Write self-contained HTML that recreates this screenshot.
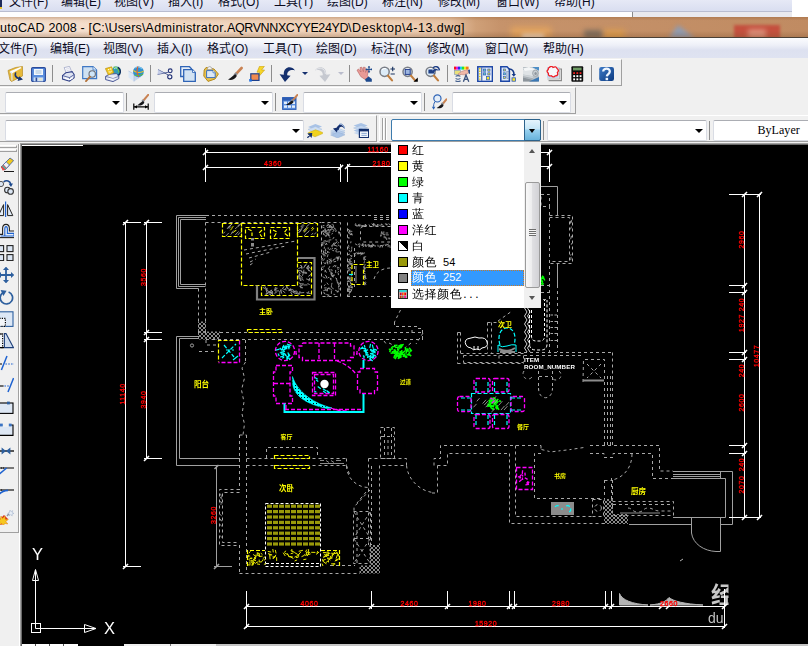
<!DOCTYPE html>
<html><head><meta charset="utf-8"><title>AutoCAD 2008</title>
<style>
html,body{margin:0;padding:0;background:#f0f0f0;overflow:hidden}
body{width:808px;height:646px;position:relative;font-family:"Liberation Sans","Noto Sans CJK SC",sans-serif;font-size:12px;color:#000}
.a{position:absolute}
.ic{position:absolute;overflow:hidden}
#top1{left:0;top:0;width:792px;height:11px;background:linear-gradient(#e6e9f6,#d9def0);overflow:hidden}
#top1 span,#menu span{position:absolute;white-space:nowrap;font-size:12px;line-height:16px;color:#0a0a1e}
#top1 span{top:-6px}
#topw{left:792px;top:0;width:16px;height:17px;background:#fff}
#top2{left:0;top:11px;width:792px;height:6px;background:linear-gradient(90deg,#fdfdfe 0,#fdfdfe 632px,#e9e9ee 632px);border-top:1px solid #b9bdd0;box-sizing:border-box}
#title{left:0;top:17px;width:808px;height:20px;background:linear-gradient(90deg,#f6e3d4 0,#f2d8c2 200px,#efd0b6 400px,#e8c4a6 450px,#cfa078 476px,#c6936b 500px,#c08b62 808px);overflow:hidden}
#title .t{position:absolute;left:-8.5px;top:3px;font-size:12.5px;line-height:16px;white-space:pre;color:#000}
#tline{left:0;top:37px;width:808px;height:1px;background:#4a4036}
#menu{left:0;top:38px;width:808px;height:20px;background:linear-gradient(#fbfcfe 0,#eef0f8 35%,#dde1f0 60%,#dfe3f1 100%);overflow:hidden}
#menu span{top:3px}
.tb{position:absolute;background:#f0f0f0;box-sizing:border-box;border-top:1px solid #fff;border-left:1px solid #fff;border-right:1px solid #a0a0a0;border-bottom:1px solid #a0a0a0}
.cb{position:absolute;background:#fff;box-sizing:border-box;border:1px solid #d9dce4;border-top-color:#abadb3;border-radius:2px;height:21px}
.cb i{position:absolute;right:3px;top:8px;width:0;height:0;border-left:4px solid transparent;border-right:4px solid transparent;border-top:4.5px solid #000}
.sep{position:absolute;width:1px;background:#8d8d8d}
.da{position:absolute;width:0;height:0;border-left:3px solid transparent;border-right:3px solid transparent;border-top:3.5px solid #15306e}
#draw{left:22px;top:145px;width:786px;height:501px;background:#000}
#dd{left:391px;top:142px;width:150px;height:166px;background:#fff;font-family:"Liberation Sans","WenQuanYi Zen Hei",sans-serif}
#dd .r u{text-decoration:none;font-size:11px;margin-left:6px;letter-spacing:-.1px}
#dd .r s{text-decoration:none;letter-spacing:2.7px;margin-left:1px}
#dd .r{position:absolute;left:0;width:133px;height:16px}
#dd .r b{position:absolute;left:7px;top:2px;width:8px;height:8px;border:1px solid #000}
#dd .r span{position:absolute;left:21px;top:-1px;font-size:12px;line-height:16px;white-space:nowrap;font-weight:normal}
</style></head><body>
<div class="a" id="top1">
<span style="left:9px">文件(F)</span><span style="left:61px">编辑(E)</span><span style="left:114px">视图(V)</span><span style="left:168px">插入(I)</span><span style="left:218px">格式(O)</span><span style="left:274px">工具(T)</span><span style="left:327px">绘图(D)</span><span style="left:382px">标注(N)</span><span style="left:438px">修改(M)</span><span style="left:496px">窗口(W)</span><span style="left:554px">帮助(H)</span>
</div>
<div class="a" style="left:0;top:0;width:2px;height:7px;background:#1c2a5a"></div><div class="a" style="left:0;top:7px;width:2px;height:2px;background:#e8c030"></div>
<div class="a" id="topw"></div>
<div class="a" id="top2"></div>
<div class="a" style="left:632px;top:12px;width:1px;height:5px;background:#8a8a8a"></div>
<div class="a" id="title"><div style="position:absolute;left:511px;top:10px;width:40px;height:14px;background:#e2a35e;filter:blur(3px)"></div><div style="position:absolute;left:522px;top:17px;width:22px;height:6px;background:#f0d8c0;filter:blur(2px)"></div><div style="position:absolute;left:603px;top:13px;width:22px;height:12px;background:#dc9c4c;filter:blur(3px)"></div><div style="position:absolute;left:584px;top:13px;width:18px;height:10px;background:#7c6c5c;filter:blur(2.5px)"></div><div style="position:absolute;left:668px;top:8px;width:0;height:0;border-left:10px solid transparent;border-right:18px solid transparent;border-bottom:14px solid #8f9bb0;filter:blur(2px)"></div><div style="position:absolute;left:734px;top:8px;width:46px;height:16px;background:#c4503e;filter:blur(1.6px)"></div><div style="position:absolute;left:748px;top:12px;width:18px;height:10px;background:#dc8c78;filter:blur(2.5px)"></div><div style="position:absolute;left:0;top:0;width:808px;height:20px;background:linear-gradient(rgba(150,95,50,.38) 0,rgba(190,140,100,.1) 18%,rgba(255,255,255,0) 35%,rgba(255,255,255,0) 70%,rgba(130,85,50,.32) 100%)"></div><div class="t"><span style="letter-spacing:.17px">AutoCAD 2008 - </span><span style="letter-spacing:.14px">[C:\Users\</span><span style="letter-spacing:.36px">Administrator.</span><span style="letter-spacing:-.39px">AQRVNNXCYYE24YD</span><span style="letter-spacing:.58px">\Desktop</span><span style="letter-spacing:.46px">\4-13.dwg]</span></div></div>
<div class="a" id="tline"></div>
<div class="a" id="menu">
<span style="left:-2px">文件(F)</span><span style="left:50px">编辑(E)</span><span style="left:103px">视图(V)</span><span style="left:157px">插入(I)</span><span style="left:207px">格式(O)</span><span style="left:263px">工具(T)</span><span style="left:316px">绘图(D)</span><span style="left:371px">标注(N)</span><span style="left:427px">修改(M)</span><span style="left:485px">窗口(W)</span><span style="left:543px">帮助(H)</span>
</div>
<!-- toolbars -->
<div class="tb" id="tb1" style="left:-2px;top:59px;width:624px;height:27px"></div>
<div class="tb" id="tb2" style="left:-2px;top:87px;width:578px;height:27px"></div>
<div class="tb" id="tb3" style="left:-2px;top:115px;width:379px;height:27px"></div>
<div class="tb" id="tb4" style="left:379px;top:115px;width:440px;height:27px"></div>

<svg class="ic" style="left:7px;top:66px" width="16" height="16" viewBox="0 0 16 16"><path d="M1 4.5 L8.5 1.5 L15.5 .5 L15.5 10 L4.5 15.5 L3 14Z" fill="#e6b93a" stroke="#b88d25" stroke-width=".7"/>
<path d="M3 5.2 L13.5 1 L14.5 2 L4.8 7.5Z" fill="#fdfdfd"/><path d="M3 5.5 L4.8 7.5 L5 14.5" fill="none" stroke="#dfe8f2" stroke-width="1.2"/>
<path d="M8.2 6.2 C6.5 9 8 12.3 11.2 13 L10.6 15 L16 13.6 L12.4 10.2 L11.9 11.6 C9.6 11 8.4 9 9.4 6.6Z" fill="#18336e"/></svg>
<svg class="ic" style="left:31px;top:66px" width="16" height="16" viewBox="0 0 16 16"><rect x=".6" y="1.6" width="13.8" height="13.8" rx="1.2" fill="#5b8fde" stroke="#2a4a9a" stroke-width="1.1"/>
<rect x="3" y="3" width="9" height="6" fill="#f4f8fc"/><path d="M4.5 5h6M4.5 7h6" stroke="#8fb0cf" stroke-width=".8"/>
<rect x="2.6" y="11.4" width="9.6" height="4" fill="#cfe0f4"/><rect x="4.6" y="11.6" width="1.6" height="3.8" fill="#2a4a9a"/><rect x="8" y="12" width="3" height="2.4" fill="#e6e6d0"/></svg>
<svg class="ic" style="left:60px;top:66px" width="16" height="16" viewBox="0 0 16 16"><g transform="translate(1.6 0) scale(.84 1)"><path d="M3 1.6 L9.4 .4 L12 5.8 L6 7.8Z" fill="#f8f8fb" stroke="#8e96bc" stroke-width=".7"/><path d="M5.2 3.2 l4-.9M5.9 4.8l4-.9" stroke="#c4c9dc" stroke-width=".6"/>
<path d="M1 9.6 L5 6.8 L12.6 5.6 L15 8.6 L15 11.8 L9.4 15.2 L1 13Z" fill="#dfe4f2" stroke="#2f3f86" stroke-width="1.1"/><path d="M1 9.6 L9.4 11.6 L15 8.6 M9.4 11.6V15" stroke="#2f3f86" stroke-width=".8" fill="none"/>
<path d="M4 12.2 L9.8 13.6 L13.4 11.6" fill="none" stroke="#fff" stroke-width="1.3"/></g></svg>
<svg class="ic" style="left:82px;top:66px" width="16" height="16" viewBox="0 0 16 16"><path d="M.7 .7 H11 L14.6 4 V12.6 H.7Z" fill="#cfe1f2" stroke="#3f78c4" stroke-width="1.2"/><path d="M11 .7 V4 H14.6" fill="#eaf2fa" stroke="#3f78c4" stroke-width=".8"/>
<circle cx="10.2" cy="8" r="3.2" fill="#cfe6f8" stroke="#6b6f78" stroke-width="1.1"/><path d="M8 10.6 L4 15.2" stroke="#b5733a" stroke-width="1.8" stroke-linecap="round"/></svg>
<svg class="ic" style="left:105px;top:66px" width="16" height="16" viewBox="0 0 16 16"><circle cx="11.4" cy="5.2" r="4.6" fill="#2f9ab8"/><path d="M8.6 1.6 C11.4 .6 14 2.4 14 6.6" fill="none" stroke="#62c45e" stroke-width="1.7"/><path d="M13 1.4 C16.6 4 15.6 8.4 13 9.6" fill="none" stroke="#16305e" stroke-width="1.4"/><path d="M9 3 a3 3 0 0 1 3-1" stroke="#bfe8f4" stroke-width=".9" fill="none"/>
<path d="M.6 10.4 L4.4 8.2 L11.6 7.6 L13.8 10.4 L13.8 12.6 L8 15.6 L.6 13.6Z" fill="#e4e8f4" stroke="#3d4c8e" stroke-width=".9"/><path d="M3.4 12.2 L8.6 10.6 L11.8 11.6 L7 14Z" fill="#fff"/><path d="M.6 10.4 L8 12.4 L13.8 10.4" fill="none" stroke="#3d4c8e" stroke-width=".6"/>
<path d="M.4 2.6 L6.6 .8 L8.8 6.6 L3.4 9Z" fill="#f2c81e" stroke="#b98f14" stroke-width=".7"/><circle cx="3.6" cy="3.6" r=".7" fill="#fff"/><circle cx="5.8" cy="3" r=".7" fill="#fff"/><path d="M3.6 5.8 Q5.4 6.8 6.8 5" stroke="#fff" stroke-width=".8" fill="none"/></svg>
<svg class="ic" style="left:128px;top:66px" width="16" height="16" viewBox="0 0 16 16"><path d="M.5 5 L6 8 L6 15.5 L.5 11.5Z" fill="#dbe7f6"/><path d="M6 8 L13 11 L6 15.5Z" fill="#c4d4ea"/><path d="M.5 5 L6 8 L6 15.5" fill="none" stroke="#a9bad6" stroke-width=".6"/>
<circle cx="10.4" cy="5.8" r="5.4" fill="#2f8fd0"/><path d="M7 2 A5 5 0 0 1 14 3" stroke="#7cc4ee" stroke-width="1.2" fill="none"/><path d="M5.4 4.5 C8 6.6 12 7 15.6 5.2" fill="none" stroke="#e8c62a" stroke-width="1.2"/><path d="M9.8 .6 C8.6 4 9 8 10.8 11" fill="none" stroke="#e06030" stroke-width="1.2"/><path d="M6.5 9 C9 10 13 9.5 15 8" fill="none" stroke="#58b84e" stroke-width="1.1"/></svg>
<svg class="ic" style="left:157px;top:66px" width="16" height="16" viewBox="0 0 16 16"><path d="M1 3.6 L11.4 9 M.6 8.4 L11.6 6.2" stroke="#44548e" stroke-width=".9" fill="none"/><path d="M1 3.6 L7 6.8 L.6 8.4Z" fill="#bcc6e6" opacity=".8"/>
<circle cx="13.2" cy="4.8" r="1.9" fill="#f4f4f8" stroke="#1f2f74" stroke-width="1.1"/><circle cx="12.8" cy="10.8" r="2.1" fill="#f4f4f8" stroke="#1f2f74" stroke-width="1.1"/></svg>
<svg class="ic" style="left:180px;top:66px" width="16" height="16" viewBox="0 0 16 16"><path d="M.7 .7 H9.5 L11.5 2.8 V10.5 H.7Z" fill="#e6eef8" stroke="#2f64b6" stroke-width="1.3"/><path d="M3.7 3.7 H12.5 L15.3 6.5 V15.3 H3.7Z" fill="#d3e3f3" stroke="#2f64b6" stroke-width="1.3"/><path d="M12.5 3.7 V6.5 H15.3" fill="#f2f7fc" stroke="#2f64b6" stroke-width=".8"/></svg>
<svg class="ic" style="left:203px;top:66px" width="16" height="16" viewBox="0 0 16 16"><path d="M3 1.5 L11 3 L15.4 8 L12 13 L5 15.4 L.8 10 L1.2 4Z" fill="#e9c34e" stroke="#b58a1c" stroke-width="1"/><path d="M4.5 2 Q6 -.5 8 1 L9.6 3.4 L4 3.6Z" fill="#f3f3f3" stroke="#8c8c8c" stroke-width=".6"/>
<path d="M3.6 4.6 H10 L12.2 6.8 V11.6 H3.6Z" fill="#dce9f6" stroke="#3a6fbe" stroke-width="1"/><path d="M10 4.6 V6.8 H12.2" fill="#fff" stroke="#3a6fbe" stroke-width=".7"/></svg>
<svg class="ic" style="left:227px;top:66px" width="16" height="16" viewBox="0 0 16 16"><path d="M14.6 2 L8.4 8.6" stroke="#c98252" stroke-width="2.6" stroke-linecap="round"/><path d="M9.6 7.2 L7.6 9.6" stroke="#8a8f98" stroke-width="2.8"/><path d="M8.4 8.2 C6 9 4 12 1 13.6 C4.5 14.6 8 13.2 9.8 10Z" fill="#16161a"/></svg>
<svg class="ic" style="left:249px;top:66px" width="16" height="16" viewBox="0 0 16 16"><path d="M10.5 .3 L15.4 .3 L12.6 4 L15.6 4 L9 11.5 L10.8 6.2 L8 6.2Z" fill="#f6d628" stroke="#c9a010" stroke-width=".6"/><rect x="1.8" y="7.8" width="8.2" height="6.6" fill="#f08a50" stroke="#1c3f8c" stroke-width="1.2"/><rect x=".2" y="13" width="2.6" height="2.6" fill="#1e6ee0"/></svg>
<svg class="ic" style="left:279px;top:66px" width="16" height="16" viewBox="0 0 16 16"><path d="M16 4.4 C12.6 -.8 4.2 .4 4.8 8.8 L.6 8.2 L6 16 L11.6 9.8 L8.2 9.2 C8 4.8 12 3 16 4.4Z" fill="#15306e"/></svg>
<svg class="ic" style="left:315px;top:66px" width="16" height="16" viewBox="0 0 16 16"><path d="M0 4.4 C3.4 -.8 11.8 .4 11.2 8.8 L15.4 8.2 L10 16 L4.4 9.8 L7.8 9.2 C8 4.8 4 3 0 4.4Z" fill="#c6c9d0"/><path d="M1 4 C4 1 10 1.4 10.4 8" stroke="#e6e8ec" stroke-width="1" fill="none"/></svg>
<svg class="ic" style="left:356px;top:66px" width="16" height="16" viewBox="0 0 16 16"><path d="M1 4.2 L2.6 3 L5 6 L4 1.6 L5.8 1.2 L7.4 5.6 L7.4 1.2 L9.2 1.4 L9.6 6.4 L11 3.6 L12.4 4.4 L11.4 9.6 L12.8 11.4 L9 13.4 L4.8 10.6Z" fill="#e89a96" stroke="#b4605e" stroke-width=".6"/>
<path d="M9 13.4 L12.6 10.6 L15.8 13 L15.8 15.8 L10 15.8Z" fill="#1d4a8e"/><path d="M13 .2 V6.6 M9.8 3.4 H16.2" stroke="#1d4a8e" stroke-width="1"/><path d="M13 0 l-1.3 1.5h2.6z M13 6.8 l-1.3-1.5h2.6z M9.6 3.4 l1.5-1.3v2.6z M16.4 3.4 l-1.5-1.3v2.6z" fill="#1d4a8e"/></svg>
<svg class="ic" style="left:379px;top:66px" width="16" height="16" viewBox="0 0 16 16"><circle cx="5.6" cy="5.8" r="4.6" fill="#dcebf7" stroke="#7a7e86" stroke-width="1.5"/><path d="M3 4 A3.4 3.4 0 0 1 7 2.8" stroke="#fff" stroke-width="1.2" fill="none"/><path d="M9 9.6 L13 14.4" stroke="#c07e3e" stroke-width="2.2" stroke-linecap="round"/><path d="M11.4 3 H16 M13.7 .8 V5.2 M11.6 8 H15.8" stroke="#16305e" stroke-width="1.1"/></svg>
<svg class="ic" style="left:402px;top:66px" width="16" height="16" viewBox="0 0 16 16"><circle cx="5.6" cy="5.8" r="4.6" fill="#dcebf7" stroke="#7a7e86" stroke-width="1.5"/><path d="M3 4 A3.4 3.4 0 0 1 7 2.8" stroke="#fff" stroke-width="1.2" fill="none"/><path d="M9 9.6 L13 14.4" stroke="#c07e3e" stroke-width="2.2" stroke-linecap="round"/><rect x="3.2" y="3.4" width="5" height="5" fill="#9db6e0" stroke="#233c8c" stroke-width="1"/><path d="M15.8 11.5 V15.8 H11.5Z" fill="#000"/></svg>
<svg class="ic" style="left:425px;top:66px" width="16" height="16" viewBox="0 0 16 16"><circle cx="5.6" cy="5.8" r="4.6" fill="#dcebf7" stroke="#7a7e86" stroke-width="1.5"/><path d="M3 4 A3.4 3.4 0 0 1 7 2.8" stroke="#fff" stroke-width="1.2" fill="none"/><path d="M9 9.6 L13 14.4" stroke="#c07e3e" stroke-width="2.2" stroke-linecap="round"/><path d="M3.4 3.4 H7.6 V4.8 C9.6 2.2 12.6 2.2 13.6 5 C12 3.6 10.6 4 9 6.4 L10.4 7.6 H3.4Z" fill="#1f3f86"/><path d="M8 2.2 C10 -.4 14 .2 14.4 4.4" stroke="#1f3f86" stroke-width="1.4" fill="none"/></svg>
<svg class="ic" style="left:454px;top:66px" width="16" height="16" viewBox="0 0 16 16"><rect x="0" y=".6" width="2" height="3" fill="#f0101c"/><rect x="2" y=".6" width="2" height="3" fill="#e818d8"/><rect x="4" y=".6" width="2" height="3" fill="#2030f0"/><rect x="6" y=".6" width="2" height="3" fill="#18d0e8"/><rect x="8" y=".6" width="2" height="3" fill="#28e030"/><rect x="10" y=".6" width="2" height="3" fill="#f0e818"/><rect x="12" y=".6" width="2.6" height="3" fill="#f07818"/>
<rect x=".4" y="4.4" width="6" height="4.2" fill="#e8e07a" stroke="#7f93b6" stroke-width=".6"/><path d="M4 8 L7.4 5.6 L10 4.6 L13.6 3.8 L14.6 7 L11 9 L7 8.4 L5.4 9.2Z" fill="#f0b8a8" stroke="#b5776c" stroke-width=".5"/><path d="M14 4 L16 3.4 L16 8 L14.8 7.6Z" fill="#2a4a86"/>
<path d="M1.6 10.4 Q4 8.8 6.4 10.4 M1.6 12.4 Q4 14 6.4 12.4 M1.4 14.8 Q4 16.4 6.6 14.8" stroke="#44608e" stroke-width="1.1" fill="none"/><path d="M9.4 15.8 L12 9 L14.8 15.8 M10.4 13.4 H13.8" stroke="#39507c" stroke-width="1.3" fill="none"/></svg>
<svg class="ic" style="left:477px;top:66px" width="16" height="16" viewBox="0 0 16 16"><rect x=".8" y=".8" width="14.6" height="14.6" fill="#eef3fa" stroke="#1c46a6" stroke-width="1.5"/><path d="M2.8 2v12" stroke="#e8d21e" stroke-width="1.6" stroke-dasharray="1.4 1.2"/><path d="M4.8 1.5v13.2" stroke="#1c46a6" stroke-width="1"/>
<g fill="#e8e04a" stroke="#2a56b8" stroke-width=".7"><rect x="6.6" y="3" width="2.2" height="2.2" fill="#6ad0c0"/><rect x="10.8" y="3" width="2.2" height="2.2"/><rect x="6.6" y="6.8" width="2.2" height="2.2" fill="#6ad0c0"/><rect x="10.8" y="6.8" width="2.2" height="2.2"/><rect x="9.4" y="10.6" width="3.2" height="3.2" fill="#f4e430"/></g></svg>
<svg class="ic" style="left:500px;top:66px" width="16" height="16" viewBox="0 0 16 16"><path d="M.8 .8 H7 L9.4 3.2 V15.2 H.8Z" fill="#dfe9f6" stroke="#1c46a6" stroke-width="1.5"/><g fill="#e8e04a" stroke="#2a56b8" stroke-width=".6"><rect x="3.6" y="3" width="2" height="2"/><rect x="3.6" y="6.8" width="2" height="2" fill="#6ad0c0"/><rect x="3.6" y="10.6" width="2" height="2"/></g>
<rect x="6.8" y="5.6" width="2" height="7" fill="#b8c8e0" stroke="#6c84b0" stroke-width=".5"/><path d="M8.6 3 C12.4 2.6 14 5.4 14 8.4" stroke="#163a8a" stroke-width="1.6" fill="none"/><path d="M11.6 8 H16 L13.8 10.8Z" fill="#163a8a"/><rect x="12" y="11.8" width="3.4" height="3.4" fill="#f4e430" stroke="#2a56b8" stroke-width=".8"/></svg>
<svg class="ic" style="left:523px;top:66px" width="16" height="16" viewBox="0 0 16 16"><rect x="0" y="1" width="16" height="14.4" fill="#b9c0c6"/><path d="M9 1H16V5Z" fill="#4d8ec6"/><path d="M0 11.5 L16 15.4 H0Z" fill="#8d959c"/><path d="M6 15.4 L16 11 V15.4Z" fill="#3b78b4"/><path d="M0 4 L9 1.6 L15.6 4.6 L15.6 9.6 L12 10.6 L0 8.6Z" fill="#dfe3e6"/><path d="M0 2.4 L6 1 L12 3.4 L2 5Z" fill="#f4f6f7"/><ellipse cx="12.4" cy="7.2" rx="2.8" ry="3.2" fill="#c9cfd4" stroke="#8c9298" stroke-width=".7"/><ellipse cx="12.6" cy="7.4" rx="1.2" ry="1.5" fill="#8e959c"/><path d="M0 8.6 L10 10.4 L10 12.6 L0 10.6Z" fill="#ccd2d6"/><path d="M0 10.6 L10 12.8" stroke="#9aa1a8" stroke-width=".6"/></svg>
<svg class="ic" style="left:546px;top:66px" width="16" height="16" viewBox="0 0 16 16"><path d="M4 3 H15.4 V14.6 H2.6" fill="none" stroke="#8b8b8b" stroke-width="1.2"/><path d="M3 2 H13.6 V13 H1.4" fill="#ededed" stroke="#aaa" stroke-width=".8"/><rect x="1" y="1" width="11.6" height="11" fill="#c6d8ee"/>
<path d="M3.4 1.4 Q5.6 -.6 7 1.4 Q10 -.2 11 2.4 Q13.6 4.4 11.4 6.4 Q12.6 9.6 9.4 9.8 Q7.4 12 5.4 9.8 Q2 10.4 2.4 7.2 Q-.2 5 2.2 3.6 Q2 2 3.4 1.4Z" fill="#f6f8fb" stroke="#ee1c24" stroke-width="1.3"/></svg>
<svg class="ic" style="left:571px;top:66px" width="16" height="16" viewBox="0 0 16 16"><rect x=".4" y=".2" width="11.8" height="15.6" rx="1" fill="#0c0c0c"/><rect x="2" y="1.6" width="8.6" height="2.8" fill="#6d9a62"/><g fill="#ee2222"><rect x="2.2" y="6.2" width="1.8" height="1.8"/><rect x="5.4" y="6.2" width="1.8" height="1.8"/><rect x="8.6" y="6.2" width="1.8" height="1.8"/></g><g fill="#fff"><rect x="2.2" y="9.2" width="1.9" height="1.9"/><rect x="5.4" y="9.2" width="1.9" height="1.9"/><rect x="8.6" y="9.2" width="1.9" height="1.9"/><rect x="2.2" y="12.4" width="1.9" height="1.9"/><rect x="5.4" y="12.4" width="1.9" height="1.9"/><rect x="8.6" y="12.4" width="1.9" height="1.9"/></g></svg>
<svg class="ic" style="left:599px;top:66px" width="16" height="16" viewBox="0 0 16 16"><defs><linearGradient id="hg" x1="0" y1="0" x2="1" y2="1"><stop offset="0" stop-color="#3d7ac6"/><stop offset="1" stop-color="#0c3a80"/></linearGradient></defs><rect x=".2" y="1" width="14.8" height="14" rx="2.2" fill="url(#hg)"/><path d="M4.2 5.6 C4.2 1.6 11 1.8 10.8 5.6 C10.8 8 8 8 7.8 10.4" fill="none" stroke="#eef6ff" stroke-width="2.3"/><rect x="6.6" y="11.8" width="2.5" height="2.4" fill="#eef6ff"/></svg>
<div class="sep" style="left:52px;top:65px;height:17px"></div>
<div class="sep" style="left:150px;top:65px;height:17px"></div>
<div class="sep" style="left:271px;top:65px;height:17px"></div>
<div class="sep" style="left:349px;top:65px;height:17px"></div>
<div class="sep" style="left:447px;top:65px;height:17px"></div>
<div class="sep" style="left:591px;top:65px;height:17px"></div>
<div class="da" style="left:302px;top:72px"></div><div class="da" style="left:338px;top:72px;border-top-color:#b9bccc"></div>
<div class="cb" style="left:5px;top:92px;width:119px"><i></i></div>
<div class="cb" style="left:154px;top:92px;width:119px"><i></i></div>
<div class="cb" style="left:303px;top:92px;width:119px"><i></i></div>
<div class="cb" style="left:452px;top:92px;width:119px"><i></i></div>
<div class="sep" style="left:126px;top:93px;height:18px"></div>
<div class="sep" style="left:275px;top:93px;height:18px"></div>
<div class="sep" style="left:424px;top:93px;height:18px"></div>
<svg class="ic" style="left:133px;top:94px" width="16" height="16" viewBox="0 0 16 16"><path d="M15.2 .8 L10 7" stroke="#c98252" stroke-width="2" stroke-linecap="round"/><path d="M10.8 6 L9.4 7.8" stroke="#8a8f98" stroke-width="2.6"/><path d="M10 7 C8 8 6.4 10 4 11.4 C7 12 10 11 11.4 8.4Z" fill="#16161a"/><path d="M.8 9.6 V15.8 M15.2 9.6 V15.8 M.8 12.8 H15.2" stroke="#000" stroke-width="1.2"/><path d="M1 12.8 l3-1.6v3.2z M15 12.8 l-3-1.6v3.2z" fill="#000"/></svg>
<svg class="ic" style="left:282px;top:94px" width="16" height="16" viewBox="0 0 16 16"><rect x=".6" y="3.6" width="13.4" height="11.8" fill="#5b8fde" stroke="#2c5cb4" stroke-width="1"/><rect x=".6" y="3.6" width="13.4" height="3" fill="#2c5cb4"/><g fill="#e4eefb"><rect x="2" y="7.6" width="3" height="2.4"/><rect x="6" y="7.6" width="3" height="2.4"/><rect x="10" y="7.6" width="3" height="2.4"/><rect x="2" y="11.4" width="3" height="2.4"/><rect x="6" y="11.4" width="3" height="2.4"/><rect x="10" y="11.4" width="3" height="2.4"/></g>
<path d="M15.4 1 L10.4 6.6" stroke="#c98252" stroke-width="2" stroke-linecap="round"/><path d="M11 5.6 L9.6 7.4" stroke="#8a8f98" stroke-width="2.6"/><path d="M10.2 6.6 C8 7.4 6.4 9.6 4 10.8 C7 11.6 10 10.6 11.6 8Z" fill="#16161a"/></svg>
<svg class="ic" style="left:431px;top:94px" width="16" height="16" viewBox="0 0 16 16"><circle cx="6.4" cy="4.4" r="3.6" fill="#e4eef9" stroke="#2f64b6" stroke-width="1.2"/><path d="M4.2 7.4 C2.4 9.4 2.6 12 2.6 14" stroke="#2f64b6" stroke-width="1" fill="none"/><path d="M2.6 15.8 l-1.8-3h3.6z" fill="#2f64b6"/><path d="M15.4 5.4 L11.6 10" stroke="#c98252" stroke-width="2" stroke-linecap="round"/><path d="M12 9 L10.6 10.8" stroke="#8a8f98" stroke-width="2.4"/><path d="M11.2 10 C9.4 10.8 8 12.8 5.6 14 C8.6 14.8 11.4 13.8 12.6 11.4Z" fill="#16161a"/></svg>
<div class="cb" style="left:5px;top:120px;width:299px"><i></i></div>
<svg class="ic" style="left:307px;top:122px" width="16" height="16" viewBox="0 0 16 16"><path d="M1 5 L8.4 2 L15 4.6 L7.8 7.8Z" fill="#a9c3e6"/><path d="M1 7.4 L8.4 4.6 L15 7.2 L7.8 10.4Z" fill="#cfdff3" stroke="#9bb5da" stroke-width=".4"/><path d="M1.4 10.6 L8.6 7.8 L15.6 10.4 L15.6 11.6 L8 14.8 L1.4 12Z" fill="#f0d21e" stroke="#c3a413" stroke-width=".5"/><path d="M.4 15.8 L4.4 12 M4.6 11.6 l-3 .4 2.6 2.6z" stroke="#15306e" stroke-width="1.2" fill="#15306e"/></svg>
<svg class="ic" style="left:330px;top:122px" width="16" height="16" viewBox="0 0 16 16"><path d="M.6 9 L8 6.2 L15 8.8 L7.6 12Z" fill="#cfdff3" stroke="#9bb5da" stroke-width=".4"/><path d="M.6 11 L8 8.2 L15 10.8 L7.6 14Z" fill="#b9cfec" stroke="#8fabd4" stroke-width=".4"/><path d="M.6 13 L8 10.2 L15 12.8 L7.6 16Z" fill="#a9c3e6" stroke="#8aa6cf" stroke-width=".4"/>
<path d="M3 6.4 L8.6 5.2 L6.8 10.4Z" fill="#15306e"/><path d="M6.4 7.4 C7 2 12.6 1 14.4 6.6 C12 3.4 9 4.4 8.8 8Z" fill="#15306e"/><path d="M9 2.6 C11.6 1 14.2 3 14.4 6.6" stroke="#5f86c2" stroke-width="1" fill="none"/></svg>
<svg class="ic" style="left:353px;top:122px" width="16" height="16" viewBox="0 0 16 16"><path d="M.6 3.6 L8 1 L14.6 3.4 L7.4 6.4Z" fill="#a9c3e6"/><path d="M.6 6 L8 3.4 L14.6 5.8 L7.4 8.8Z" fill="#c3d6ef" stroke="#9bb5da" stroke-width=".4"/><path d="M.6 8.6 L8 6 L14.6 8.4 L7.4 11.4Z" fill="#a9c3e6"/><path d="M.6 11 L8 8.4 L12 10 L7.4 13.6Z" fill="#c3d6ef"/>
<rect x="6.4" y="7.4" width="9.2" height="8.2" fill="#eef4fb" stroke="#12306e" stroke-width="1.2"/><rect x="6.4" y="7.4" width="9.2" height="2" fill="#12306e"/><path d="M8.4 11.4 H13.8 M8.4 13.4 H13.8" stroke="#7fa0cf" stroke-width=".9"/></svg>
<div class="a" style="left:382px;top:118px;width:1px;height:22px;background:#a0a0a0"></div><div class="a" style="left:383px;top:118px;width:1px;height:22px;background:#fff"></div><div class="a" style="left:385px;top:118px;width:1px;height:22px;background:#a0a0a0"></div><div class="a" style="left:386px;top:118px;width:1px;height:22px;background:#fff"></div>
<div class="a" style="left:391px;top:119px;width:150px;height:22px;box-sizing:border-box;background:#fff;border:1px solid #3d7bad;border-radius:2px"></div>
<div class="a" style="left:524px;top:119px;width:17px;height:22px;box-sizing:border-box;border:1px solid #2c628b;border-radius:0 2px 2px 0;background:linear-gradient(#e5f4fc 0,#c4e5f6 45%,#98d1ef 50%,#68b3db 100%)"><i style="position:absolute;left:4px;top:9px;width:0;height:0;border-left:3.5px solid transparent;border-right:3.5px solid transparent;border-top:4px solid #000"></i></div>
<div class="sep" style="left:543px;top:121px;height:19px"></div>
<div class="cb" style="left:547px;top:120px;width:160px"><i></i></div>
<div class="sep" style="left:709px;top:121px;height:19px"></div>
<div class="cb" style="left:713px;top:120px;width:100px"><span style="position:absolute;left:43.5px;top:1px;font:12px/16px 'Liberation Serif',serif;letter-spacing:.05px">ByLayer</span></div>
<div class="a" style="left:0;top:144px;width:22px;height:502px;background:#f0f0f0"></div>
<div class="a" style="left:18px;top:144px;width:1px;height:389px;background:#a0a0a0"></div><div class="a" style="left:19px;top:144px;width:1px;height:502px;background:#fff"></div>
<div class="a" style="left:0;top:532px;width:19px;height:1px;background:#a0a0a0"></div>
<div class="a" style="left:0;top:145px;width:17px;height:3px;box-sizing:border-box;border:1px solid #fff;border-right-color:#a0a0a0;border-bottom-color:#a0a0a0;border-left:0"></div><div class="a" style="left:0;top:149px;width:17px;height:3px;box-sizing:border-box;border:1px solid #fff;border-right-color:#a0a0a0;border-bottom-color:#a0a0a0;border-left:0"></div>
<svg class="ic" style="left:-2px;top:156px" width="16" height="16" viewBox="0 0 16 16"><path d="M3 11 L12 2 L15.6 4.6 L7 14Z" fill="#f0c81e" stroke="#2a4a9a" stroke-width=".7"/><path d="M3 11 L8.2 5.8 L11.4 9 L7 14Z" fill="#eef2f8" stroke="#2a4a9a" stroke-width=".6"/><path d="M3 11 L5.4 8.6 L8.8 12 L7 14 L4.6 14.4Z" fill="#e04a4a"/><path d="M4.4 9.6 L8 13" stroke="#48b8b0" stroke-width="1.4"/><path d="M6 15.6 H16" stroke="#000" stroke-width="1"/></svg>
<svg class="ic" style="left:-2px;top:179px" width="16" height="16" viewBox="0 0 16 16"><circle cx="3" cy="5" r="2.6" fill="#dbe6f4" stroke="#555" stroke-width="1"/><circle cx="9.4" cy="11" r="2.8" fill="#dbe6f4" stroke="#333" stroke-width="1.1"/><circle cx="12.6" cy="12.4" r="2.8" fill="#dbe6f4" stroke="#333" stroke-width="1.1"/><path d="M5.6 2.8 C8.6 .6 12 2 12.8 5" stroke="#1d4a8e" stroke-width="1.5" fill="none"/><path d="M10.6 4.8 L15 4.4 L13 8Z" fill="#1d4a8e"/></svg>
<svg class="ic" style="left:-2px;top:201px" width="16" height="16" viewBox="0 0 16 16"><path d="M5.6 3.6 V14.6 H.4Z" fill="#e3ecf7" stroke="#222" stroke-width="1"/><path d="M9.6 3.6 V14.6 H14.8Z" fill="#e3ecf7" stroke="#222" stroke-width="1"/><path d="M7.6 .6 V16" stroke="#1e62d0" stroke-width="1.2"/></svg>
<svg class="ic" style="left:-2px;top:223px" width="16" height="16" viewBox="0 0 16 16"><path d="M1 11.4 H4.6 V5.6 Q4.6 1.4 8 1.4 Q11.4 1.4 11.4 5.6 V8 H16" fill="none" stroke="#222" stroke-width="1.1"/><path d="M1 14.6 H16" stroke="#222" stroke-width="1.1"/><path d="M2.6 13 H6.8 V6 Q6.8 3.6 8 3.6 Q9.4 3.6 9.4 6 V10.4 H16 V13Z" fill="#e3ecf7" stroke="#1e62d0" stroke-width="1.1"/></svg>
<svg class="ic" style="left:-2px;top:245px" width="16" height="16" viewBox="0 0 16 16"><g fill="#dbe6f4" stroke="#222" stroke-width="1.1"><rect x="-.4" y=".6" width="6" height="6"/><rect x="9" y=".6" width="6" height="6"/><rect x="-.4" y="9.6" width="6" height="6"/><rect x="9" y="9.6" width="6" height="6"/></g></svg>
<svg class="ic" style="left:-2px;top:267px" width="16" height="16" viewBox="0 0 16 16"><path d="M8 1 V15 M1 8 H15" stroke="#2d5f9e" stroke-width="1.8"/><path d="M8 -.4 l-3 3.4h6z M8 16.4 l-3-3.4h6z M-.4 8 l3.4-3v6z M16.4 8 l-3.4-3v6z" fill="#2d5f9e"/></svg>
<svg class="ic" style="left:-2px;top:289px" width="16" height="16" viewBox="0 0 16 16"><path d="M5 3.6 A6.2 6.2 0 1 0 10.6 3" fill="none" stroke="#2d5f9e" stroke-width="1.7"/><path d="M2.6 1 L8.6 1.8 L5.4 7Z" fill="#2d5f9e"/></svg>
<svg class="ic" style="left:-2px;top:311px" width="16" height="16" viewBox="0 0 16 16"><rect x="-1" y=".8" width="16" height="14.6" fill="#dce7f5" stroke="#2d5f9e" stroke-width="1.1"/><rect x="-1" y="7.4" width="8.4" height="8" fill="#f3f6fa" stroke="#000" stroke-width="1.2" stroke-dasharray="1.2 1.2"/></svg>
<svg class="ic" style="left:-2px;top:333px" width="16" height="16" viewBox="0 0 16 16"><rect x="-1" y="1" width="5.6" height="13.6" fill="#f3f6fa" stroke="#000" stroke-width="1.2" stroke-dasharray="1.2 1.2"/><path d="M8 .6 L15.4 14.6 H6.4 V.6Z" fill="#cfdcee" stroke="#1d3f7a" stroke-width="1.1"/><path d="M-1 1 H4.6 M-1 14.6 H6" stroke="#000" stroke-width="1.2"/></svg>
<svg class="ic" style="left:-2px;top:355px" width="16" height="16" viewBox="0 0 16 16"><path d="M-1 9 H4" stroke="#000" stroke-width="1.1"/><path d="M3.4 15 L9 1" stroke="#1e62d0" stroke-width="1.5"/><path d="M7.4 9 H16" stroke="#1e62d0" stroke-width="1.2" stroke-dasharray="1.6 1.2"/></svg>
<svg class="ic" style="left:-2px;top:377px" width="16" height="16" viewBox="0 0 16 16"><path d="M-1 9 H5.6" stroke="#000" stroke-width="1.1"/><path d="M10 15 L15.6 1" stroke="#1e62d0" stroke-width="1.5"/><path d="M6.4 9 H12" stroke="#1e62d0" stroke-width="1.2" stroke-dasharray="1.6 1.2"/></svg>
<svg class="ic" style="left:-2px;top:399px" width="16" height="16" viewBox="0 0 16 16"><rect x="-1" y="4" width="16" height="10.4" fill="#dde7f4" stroke="#000" stroke-width="1.1"/><rect x="9" y="2.6" width="2.8" height="2.8" fill="#2d5f9e"/></svg>
<svg class="ic" style="left:-2px;top:421px" width="16" height="16" viewBox="0 0 16 16"><path d="M4 4 H-1 V14.4 H15 V4 H12" fill="#dde7f4" stroke="#000" stroke-width="1.1"/><rect x="4" y="4" width="8" height="1.8" fill="#f0f0f0"/><rect x="2" y="2.6" width="2.8" height="2.8" fill="#3b74c4"/><rect x="10.8" y="2.6" width="2.8" height="2.8" fill="#3b74c4"/></svg>
<svg class="ic" style="left:-2px;top:443px" width="16" height="16" viewBox="0 0 16 16"><path d="M-1 8 H16" stroke="#000" stroke-width="1.3"/><path d="M3.6 4.6 L8 8 L3.6 11.4Z M12.4 4.6 L8 8 L12.4 11.4Z" fill="#2d5f9e"/></svg>
<svg class="ic" style="left:-2px;top:465px" width="16" height="16" viewBox="0 0 16 16"><path d="M-1 3 H16" stroke="#000" stroke-width="1.1" stroke-dasharray="5 0"/><path d="M-1 3 H6" stroke="#000" stroke-width="1.1" stroke-dasharray="1 1"/><path d="M8.6 3 L-1 11" stroke="#1e62d0" stroke-width="1.6"/></svg>
<svg class="ic" style="left:-2px;top:487px" width="16" height="16" viewBox="0 0 16 16"><path d="M-1 3 H16" stroke="#000" stroke-width="1.1"/><path d="M-1 3 H5" stroke="#000" stroke-width="1.1" stroke-dasharray="1 1"/><path d="M10 3.4 C4 3.6 1 6 -1 11" stroke="#1e62d0" stroke-width="1.6" fill="none"/></svg>
<svg class="ic" style="left:-2px;top:509px" width="16" height="16" viewBox="0 0 16 16"><path d="M-1 13 L6 6 L10 10 L3 16Z" fill="#d82a1e"/><path d="M3 7 l1.6 2.4 2.4-2.6.2 3.4 3.2.2-2.6 2 2 2.6-3.4-.6-.8 3-1.6-2.8-3 1.4 1-3.2-3-1.4 3.2-.8z" fill="#f6c820" stroke="#e07a10" stroke-width=".5"/><path d="M9 7 L13 2.4" stroke="#8c94a0" stroke-width="1.4"/><path d="M12 1 l1 1.6 1.8-1 -.6 2 1.8.8-2 .6.2 2-1.6-1.4-1.4 1.4.2-2-1.8-.4 1.6-1z" fill="#e8eef6" stroke="#8aa0c0" stroke-width=".4"/></svg>
<div class="a" style="left:20px;top:143px;width:788px;height:503px;background:#a0a0a0"></div><div class="a" style="left:21px;top:144px;width:787px;height:502px;background:#696969"></div>
<div class="a" id="draw"></div>
<div class="a" style="left:22px;top:145px;width:61px;height:1px;background:#fff"></div>
<div class="a" style="left:22px;top:644px;width:56px;height:2px;background:#fff"></div>
<div class="a" style="left:35px;top:644px;width:1px;height:2px;background:#555"></div>
<div class="a" style="left:49px;top:644px;width:1px;height:2px;background:#555"></div>
<div class="a" style="left:63px;top:644px;width:1px;height:2px;background:#555"></div>
<div class="a" style="left:124px;top:644px;width:92px;height:2px;background:#f0f0f0"></div><div class="a" style="left:170px;top:644px;width:1px;height:2px;background:#777"></div><div class="a" style="left:216px;top:644px;width:592px;height:2px;background:#c4c4c4"></div>
<svg class="a" style="left:0;top:0;will-change:transform" width="808" height="646" viewBox="0 0 808 646">
<defs><pattern id="cs" width="3" height="3" patternUnits="userSpaceOnUse"><rect width="3" height="3" fill="#0ff"/><rect x="1" y="1" width="1" height="1" fill="#000"/></pattern><pattern id="xh" width="4" height="4" patternUnits="userSpaceOnUse"><path d="M0 0L4 4M4 0L0 4" stroke="#9a9a9a" stroke-width=".9"/></pattern></defs>
<style>
.d{fill:none;stroke:#fff;stroke-width:1}
.g{fill:none;stroke:#a0a0a0;stroke-width:1}
.gk{fill:none;stroke:#8c8c8c;stroke-width:2}
.gk2{fill:none;stroke:#808080;stroke-width:2.2}
.gf{fill:#8c8c8c}
.w,.wc{fill:none;stroke:#a8a8a8;stroke-width:1;stroke-dasharray:3 3}
.w2{fill:none;stroke:#9c9c9c;stroke-width:.9}
.w3{fill:none;stroke:#a8a8a8;stroke-width:1;stroke-dasharray:2.5 1.5}
.wd{fill:none;stroke:#fff;stroke-width:1;stroke-dasharray:3 2}
.wd2{fill:none;stroke:#e8e8e8;stroke-width:.9}
.wh{fill:none;stroke:#fff;stroke-width:1}
.wf{fill:#fff}
.y{fill:none;stroke:#ff0;stroke-width:1.2;stroke-dasharray:4 2}
.y2{fill:none;stroke:#e6e600;stroke-width:1}
.m{fill:none;stroke:#f0f;stroke-width:1.3;stroke-dasharray:4 2}
.c{fill:none;stroke:#0ff;stroke-width:1.2;stroke-dasharray:4 2}
.c2{fill:none;stroke:#0ff;stroke-width:1.2}
.c3{fill:none;stroke:#0ff;stroke-width:1}
.ck{fill:none;stroke:#0ff;stroke-width:2}
.cf{fill:#0ff}
.cf2{fill:url(#cs);stroke:#0ff;stroke-width:.6}
.gr{fill:none;stroke:#0f0;stroke-width:1.5}
.ol{fill:#99990a}
.bk{stroke:#000;stroke-width:1}
.bkf{fill:#000}
.wm{fill:#b4b4b4;stroke:#b4b4b4;stroke-width:1}
text{font-family:"Liberation Sans","Noto Sans CJK SC",sans-serif}
.r{fill:#f00;stroke:#f00;stroke-width:.35px;font-size:7px;letter-spacing:.55px;text-anchor:middle}
.t{stroke-width:1.6}
.yt{fill:#ff0;font-weight:bold}
.wt{fill:#fff;font-size:6.2px;font-weight:bold;letter-spacing:.1px}
.u{fill:#fff;font-size:16.5px;text-anchor:middle}
.wmt{fill:#c8c8c8;font-weight:bold}
.wmt2{fill:#c0c0c0}
</style>
<polyline class="g" points="206,215.5 176.5,215.5 176.5,288.5 198.5,288.5"/>
<polyline class="g" points="206,217.5 178.5,217.5 178.5,286.5 205.5,286.5"/>
<polyline class="g" points="206,219.5 180.5,219.5 180.5,284.5 205.5,284.5"/>
<polyline class="g" points="199,336.5 176.5,336.5 176.5,465.5 240,465.5"/>
<polyline class="g" points="199,338.5 179.5,338.5 179.5,458.5 240,458.5"/>
<polyline class="g" points="541,186.5 557.5,186.5 557.5,215"/>
<path class="g" d="M557.5 264L557.5 285"/>
<polyline class="g" points="673,471.5 732.5,471.5 732.5,524.5 721,524.5"/>
<path class="g" d="M673 474.5L720.5 474.5"/>
<path class="g" d="M673 476.5L720.5 476.5"/>
<polyline class="g" points="673,478.5 725.5,478.5 725.5,517.5"/>
<path class="g" d="M720.5 471.5L720.5 478.5"/>
<path class="g" d="M673 517.5L725.5 517.5"/>
<path class="g" d="M629 524.5L691.5 524.5"/>
<polyline class="g" points="691.5,517.5 691.5,533"/>
<path class="g" d="M691.5 533C693 544 704 551 716 551.5H720.5V517.5"/>
<path class="w" d="M206 215.5L391 215.5"/>
<path class="w" d="M205.5 222.5L321 222.5"/>
<path class="w" d="M205.5 222.5L205.5 334"/>
<path class="w" d="M198.5 288.5L198.5 334"/>
<path class="w" d="M374 217.5L391 217.5"/>
<path class="w" d="M374 219.5L391 219.5"/>
<path class="w" d="M220 332.5L423 332.5"/>
<path class="w" d="M206 339.5L423 339.5"/>
<polyline class="w" points="394.5,322 394.5,326.5 418,326.5 418,328.5 422.5,328.5 422.5,340"/>
<path class="w" d="M400.5 310L394.5 322"/>
<path class="w" d="M412 330L412 333"/>
<path class="w" d="M423 333L416 344"/>
<path class="w" d="M384 341L387 345"/>
<path class="w" d="M245.5 340L245.5 362"/>
<polyline class="w" points="245.5,362 242,368 244.5,378 241.5,390 244,402 242,414 244.5,424 243,435"/>
<path class="w" d="M199 351.5L214 351.5"/>
<polyline class="w" points="206,340 206,345 216,345"/>
<circle class="g" cx="192" cy="345.5" r="1.6"/>
<polyline class="w" points="239.5,435 239.5,490"/>
<path class="w" d="M246.5 435L246.5 573"/>
<path class="w" d="M239.5 435L246.5 435"/>
<path class="w" d="M239.5 545L239.5 573.5"/>
<path class="w" d="M239.5 573.5L360 573.5"/>
<path class="w" d="M246.5 458.5L346 458.5"/>
<path class="w" d="M246.5 465.5L346 465.5"/>
<path class="w" d="M346.5 458.5L346.5 465.5"/>
<polyline class="w" points="266.5,458 266.5,447.5 317.5,447.5 317.5,458"/>
<path class="w2" d="M320 460.5h4m2 0l3 2m2-2l3 2m2-2h5M320 463.5h24"/>
<polyline class="w" points="239.5,489.5 219.5,489.5 219.5,545.5 239.5,545.5"/>
<polyline class="w" points="239.5,492.5 222.5,492.5 222.5,542.5 239.5,542.5"/>
<path class="w2" d="M220.4 519.5L221.5 521.3M220.7 501.3L222.0 503.3M220.8 496.9L221.8 498.3M220.4 535.6L221.7 537.6M220.2 514.2L221.6 516.2M220.8 495.3L221.8 496.8M220.2 493.6L221.3 495.3M220.4 501.5L221.8 503.6M220.3 524.4L221.7 526.5M220.2 518.9L221.6 521.1M220.4 503.6L221.2 504.9M220.3 497.1L221.8 499.5"/>
<path class="w" d="M346.5 466C347 478 356 487 368 487.5"/>
<path class="w" d="M346.5 465.5L350 476"/>
<polyline class="w" points="368.5,458.5 406.5,458.5 406.5,465.5 379.5,465.5"/>
<path class="w" d="M368.5 458.5L368.5 545"/>
<path class="w" d="M371.5 466L371.5 545"/>
<path class="w" d="M379.5 465.5L379.5 545"/>
<path class="w" d="M406.5 465.5C408 480 420 491 433 492.5"/>
<polyline class="w" points="437.5,465.5 437.5,493 431,493"/>
<polyline class="w" points="437.5,465.5 447.5,465.5 447.5,453.5 480,453.5"/>
<polyline class="w" points="434,465.5 434,458.5 440.5,458.5 440.5,445.5 541,445.5"/>
<rect class="w" x="380.5" y="427.5" width="14" height="31"/>
<path class="w" d="M384.5 428L384.5 458"/>
<path class="w" d="M388 440L388 458"/>
<path class="w" d="M391.5 428L391.5 458"/>
<path class="w" d="M381 436.5L394 436.5"/>
<polyline class="w" points="370,490 354,507 354,511"/>
<path class="w" d="M366 492L357 503"/>
<rect class="w" x="353.5" y="511.5" width="17" height="52"/>
<path class="w" d="M354 538.5L370 538.5"/>
<path class="w" d="M354 512L370 538"/>
<path class="w" d="M370 512L354 538"/>
<path class="w" d="M354 539L370 563"/>
<path class="w" d="M370 539L354 563"/>
<path class="w" d="M357 512L357 563"/>
<path class="w" d="M330 565.5L355 565.5"/>
<path class="w" d="M480 453.5L509.5 453.5"/>
<polyline class="w" points="509.5,453.5 509.5,523.5 605,523.5"/>
<polyline class="w" points="515.5,445.5 515.5,516.5 592,516.5"/>
<polyline class="w" points="541,453.5 534.5,453.5 534.5,498.5 600,498.5"/>
<polyline class="w" points="541,445.5 541,451"/>
<path class="w" d="M541.5 449.5l8 2m3 .2l8-1m3-.3l8-1m3-.5l10-1.5"/>
<polyline class="w" points="590,453.5 604,453.5 604,457.5 613,457.5 613,453.5 652.5,453.5 652.5,478.5 673,478.5"/>
<polyline class="w" points="590,445.5 659.5,445.5 659.5,471 673,471"/>
<path class="w" d="M632 454C632 468 623 478 612 480"/>
<polyline class="w" points="604.5,480 604.5,499"/>
<path class="w" d="M612.5 480L612.5 499"/>
<path class="w" d="M604.5 480.5L612.5 480.5"/>
<path class="w" d="M611.5 478L611.5 500"/>
<rect class="w" x="612.5" y="501.5" width="61" height="14"/>
<path class="w" d="M613 504.5L673 504.5"/>
<path class="w" d="M628 508c4 0 4 4 10 4s5-4 10-4 6 3 12 3h12"/>
<path class="w2" d="M620 513L660 513"/>
<rect class="w" x="592.5" y="499.5" width="11" height="17"/>
<circle class="w" cx="598" cy="508" r="3.4"/>
<path class="w" d="M604.5 376L604.5 445"/>
<path class="w" d="M607.5 376L607.5 445"/>
<path class="w" d="M610.5 376L610.5 445"/>
<path class="w" d="M612.5 376L612.5 445"/>
<polyline class="w" points="583,382 583.5,359.5 604.5,359.5 604.5,376"/>
<path class="w" d="M587 364L601 378"/>
<path class="w" d="M601 364L587 378"/>
<path class="gk" d="M583 380.5L604 380.5"/>
<path class="w" d="M457.5 332.5L457.5 363.5"/>
<path class="w" d="M460.5 332.5L460.5 353"/>
<path class="w" d="M457.5 332.5L461 332.5"/>
<path class="w" d="M460.5 353.5L524 353.5"/>
<path class="w" d="M457.5 363.5L524 363.5"/>
<rect class="w" x="463.5" y="355.5" width="60" height="7"/>
<path class="w" d="M499 355.5L499 363"/>
<path class="w" d="M487.5 322.5L487.5 353"/>
<path class="w" d="M491.5 322.5L491.5 353"/>
<path class="w" d="M487.5 322.5L498 322.5"/>
<path class="w" d="M498 321L512 311"/>
<path class="w" d="M500 352.5L612 352.5"/>
<path class="w" d="M612.5 352.5L612.5 383"/>
<path class="w" d="M524 355.5L583 355.5"/>
<path class="w" d="M549.5 206L549.5 352"/>
<path class="w" d="M557.5 285L557.5 352"/>
<path class="w3" d="M550.5 315L557 315"/>
<path class="w3" d="M550.5 321.5L557 321.5"/>
<path class="w3" d="M550.5 327.5L557 327.5"/>
<path class="w3" d="M550.5 333.5L557 333.5"/>
<path class="w3" d="M550.5 340.5L557 340.5"/>
<rect class="w" x="541" y="194.5" width="8.5" height="12"/>
<polyline class="w" points="549.5,215.5 572.5,215.5 572.5,263.5 549.5,263.5"/>
<polyline class="w" points="549.5,217.5 569.5,217.5 569.5,261.5 549.5,261.5"/>
<path class="w2" d="M571.2 258.4L570.6 260.1M571.9 219.8L570.9 222.6M571.3 220.8L570.5 223.3M571.0 221.9L570.5 223.4M571.2 256.9L570.6 258.6M570.9 220.7L570.3 222.4M571.5 236.4L570.6 239.2M571.5 235.8L571.0 237.4M571.4 226.6L570.5 229.3M571.8 243.0L571.2 244.8M571.1 254.1L570.6 255.6"/>
<path class="w" d="M541 285.5L549 285.5"/>
<path class="w" d="M541 292.5L549 292.5"/>
<path class="w" d="M543 299.5L549 299.5"/>
<path class="w" d="M524 371a4 4 0 1 0 8 6M559 371a4 4 0 1 1 -6 8"/>
<path class="w" d="M538.5 371L538.5 390"/>
<path class="w" d="M552.5 371L552.5 390"/>
<path class="w" d="M539 376.5L552 376.5"/>
<path class="w" d="M538.5 388C538.5 401 552.5 401 552.5 388"/>
<path class="wd" d="M529.5 300V344Q529.5 350 536 350H541Q547 350 547 344V300"/>
<path class="wd" d="M531.5 300V336Q531.5 341 536 341H540Q544.5 341 544.5 336V300"/>
<path class="wd2" d="M524.5 300l2.5 4l-2.5 4l2.5 4l-2.5 4l2.5 4l-2.5 4l2.5 4l-2.5 4l2.5 4l-2.5 4l2.5 4l-2.5 4l2.5 4"/>
<path class="wd2" d="M527.5 300l2.5 4l-2.5 4l2.5 4l-2.5 4l2.5 4l-2.5 4l2.5 4l-2.5 4l2.5 4l-2.5 4l2.5 4l-2.5 4l2.5 4"/>
<text class="wt" x="524" y="361.5">ITEM</text>
<text class="wt" x="524" y="368.5">ROOM_NUMBER</text>
<path class="w2" d="M323.3 255.8L325.8 255.8M335.6 251.6L337.5 252.0M332.6 223.9L333.7 226.3M325.0 265.8L323.4 266.7M328.2 268.3L329.3 270.0M331.5 275.6L333.8 276.9M331.3 272.3L332.1 274.6M322.2 227.0L324.5 227.8M326.1 276.2L326.8 278.3M337.9 257.8L337.7 260.9M339.0 231.8L339.2 234.4M331.6 228.4L334.0 230.3M334.8 228.0L335.4 229.9M323.0 242.7L322.7 245.9M323.4 232.9L323.8 235.0M336.1 261.4L333.6 261.8M337.7 257.2L338.6 259.1M321.8 266.9L323.4 267.3M326.3 233.6L328.6 234.1M329.8 226.9L327.1 227.5M323.9 292.6L324.7 294.1M331.7 228.9L328.9 230.3M321.2 259.9L323.9 260.1M327.8 224.7L329.5 225.1M323.7 241.5L324.3 243.5M338.2 272.8L338.5 275.1M331.5 260.3L331.4 262.4M324.4 225.5L322.7 225.7M335.6 270.0L335.7 273.0M328.9 233.2L328.0 235.5M336.4 248.4L334.0 248.9M325.3 252.2L327.1 254.1M335.3 277.8L336.9 278.9M325.1 289.7L326.6 290.9M327.3 288.4L329.0 288.6M338.1 282.8L340.3 283.6M337.8 282.7L338.6 285.0M334.9 275.0L332.6 276.2M326.8 282.7L328.4 284.7M333.3 243.1L334.5 245.4M331.6 269.2L332.2 271.1M336.6 242.3L334.4 244.1M338.1 231.9L340.4 232.7M332.3 250.3L334.1 250.8M337.3 241.3L335.5 243.5M330.3 225.7L332.4 227.5M331.4 290.6L331.4 293.8M325.4 284.3L324.2 285.9M328.8 287.2L329.6 289.4M324.2 287.9L326.7 287.9M334.3 259.6L332.5 260.8M326.3 294.3L329.1 295.2M335.1 290.2L336.9 290.9M327.9 229.0L329.7 231.6M338.8 242.2L337.8 243.5M330.3 225.7L331.4 227.7M325.7 289.3L328.0 291.2M329.6 225.2L329.4 227.9M339.6 257.9L336.5 257.9M330.8 271.3L331.3 274.3M333.0 272.8L331.3 274.4M332.0 282.9L331.6 284.8M330.1 288.4L331.9 290.3M339.1 285.7L338.4 287.6M323.7 262.3L325.3 264.1M328.1 232.2L330.3 232.2M332.6 226.8L330.2 227.5M338.4 232.5L340.2 233.0M339.7 256.7L336.9 257.4M329.0 240.7L329.1 242.8M338.9 291.1L336.6 291.7M322.9 254.1L324.9 254.3M333.4 294.3L335.2 294.5M322.9 243.7L321.6 245.2M331.1 258.5L330.4 261.4M333.8 274.5L332.0 276.9M323.5 268.9L321.3 270.3M331.5 285.2L331.3 287.2M326.0 262.2L325.5 264.0M337.6 268.4L338.4 270.0M331.4 287.3L333.7 288.9M326.3 230.7L324.6 231.3M323.2 250.4L323.9 253.4M330.5 274.0L332.6 275.5M336.2 229.9L335.7 232.0M337.2 249.0L335.6 251.1M329.3 295.2L326.8 296.6M331.4 224.9L329.5 226.6M337.1 258.2L338.6 259.2M324.2 234.3L325.9 236.4M332.6 233.0L331.7 234.4M323.4 251.1L323.9 253.2M326.0 250.1L325.3 251.6M325.0 252.4L326.0 254.4M336.8 267.1L339.5 268.0M329.0 229.4L326.3 230.8M338.1 290.7L337.7 292.6M333.0 247.9L331.5 249.2M322.7 276.7L325.4 278.2M324.5 246.7L324.2 248.8M328.8 236.5L330.3 237.6M334.5 245.3L337.4 246.2M338.3 288.8L340.3 289.2M337.9 244.8L339.7 246.2M325.2 228.3L325.1 230.7M325.3 231.4L326.1 233.8M323.2 231.0L324.9 232.6M331.2 278.1L330.5 279.5M325.9 242.8L327.1 244.9M330.1 261.1L328.5 261.9M330.0 269.1L329.6 271.7M339.8 251.6L337.6 252.0M339.1 284.3L338.8 286.9M328.8 258.7L330.2 260.5M327.4 261.2L327.5 263.2M338.8 271.2L337.7 272.4M336.0 265.1L335.1 267.2M333.4 226.9L334.6 228.7M331.4 274.8L333.0 277.3M324.9 274.8L326.9 276.8M324.1 230.2L321.5 231.9M323.5 292.2L325.5 294.1M321.5 253.5L324.3 254.6M327.9 234.3L328.6 236.0M329.9 266.1L328.7 268.5M329.1 277.1L327.6 278.1M327.0 232.1L327.1 234.5M328.3 260.1L326.5 261.0M333.2 275.4L332.1 277.0M328.1 241.1L325.7 241.4M334.1 237.0L332.7 239.2M321.3 242.6L323.0 242.8M327.0 243.0L324.8 245.1M326.0 240.8L323.6 241.0M328.2 247.4L328.2 249.3M337.0 280.3L337.5 283.2M336.4 278.0L336.9 280.7M327.5 234.2L330.1 235.5M333.5 243.9L331.4 245.9M325.5 269.9L324.9 272.2M327.4 261.9L327.9 264.4M337.0 256.9L335.6 257.8M327.9 288.3L327.0 290.9M329.9 277.7L331.4 280.3M325.0 270.0L326.6 272.6M328.1 254.3L327.2 257.2M334.2 242.5L333.9 245.7M331.4 239.8L328.6 240.1M331.7 229.6L330.3 230.5M335.0 265.3L332.7 266.9M327.3 251.5L329.6 252.7M324.9 229.0L325.3 231.9M335.3 239.8L337.1 240.1M328.2 225.1L326.2 226.2M332.3 244.9L332.0 247.1M326.3 230.9L327.2 232.3M334.4 230.4L332.5 231.6M335.5 258.9L333.4 259.5M330.9 248.6L329.2 249.8M325.1 258.6L323.7 259.6M334.0 226.2L331.7 228.4M327.8 223.5L328.4 225.1M329.0 262.9L331.2 263.1M323.7 231.6L321.0 232.3M326.9 234.5L325.7 236.9M327.7 251.0L327.5 253.0M338.2 257.2L336.8 258.7M326.1 289.8L323.4 290.6M323.2 258.0L321.5 259.3M325.8 248.6L325.1 251.1"/>
<rect class="w" x="321.5" y="222.5" width="19" height="74"/>
<path class="w2" d="M349.6 259.2L350.1 262.0M350.8 289.3L348.4 289.8M352.8 263.1L350.8 264.1M350.3 291.6L349.0 294.0M348.1 285.2L348.7 287.0M349.9 281.4L347.2 281.6M349.7 280.5L352.5 281.0M352.6 286.6L350.5 287.3M350.0 253.9L348.0 254.8M352.4 234.0L349.8 234.8M348.9 276.3L348.1 278.5M347.4 264.7L349.0 265.7M350.7 234.3L352.6 235.1M351.7 261.6L349.3 262.4M348.5 276.8L348.2 279.0M347.0 236.8L349.1 238.2M350.1 255.6L352.2 255.8M351.0 292.0L349.0 292.3M350.9 264.0L348.4 264.1M347.1 228.8L349.4 229.9M351.4 277.2L350.0 278.3M350.5 285.3L349.1 287.1M350.2 231.2L348.1 233.1M352.2 275.5L350.6 276.0M351.5 290.5L349.5 292.5M350.2 263.8L351.9 264.2M349.0 231.1L350.0 232.7M349.7 269.1L350.1 271.1M347.3 268.3L349.5 269.3M347.6 237.8L349.8 238.0M349.3 231.1L352.3 231.4M349.1 278.3L350.4 280.7M351.0 233.5L352.4 234.5M351.9 258.5L349.6 259.1M350.2 267.0L351.6 269.3M349.1 294.0L348.9 295.9M348.5 244.9L349.0 247.2M348.3 247.3L349.3 248.6M351.0 241.3L350.7 243.2M349.0 266.9L348.9 269.2M350.1 291.2L347.5 291.2M350.5 264.7L353.0 265.0M351.0 232.8L351.2 234.9M350.2 230.2L348.5 231.0M352.1 255.9L350.9 257.3M348.9 263.0L351.7 263.6M349.6 277.4L347.7 278.0M347.3 291.2L349.8 291.3M349.1 277.8L349.8 279.4M350.2 281.4L350.5 283.5M352.0 290.9L350.3 291.0M352.2 284.7L349.9 285.4M349.6 278.5L351.5 279.5M347.1 261.6L349.1 262.4M348.3 232.5L350.4 234.5M349.1 279.4L347.4 281.5M348.7 259.5L350.6 260.1M351.8 288.7L351.4 290.8M349.0 286.6L349.3 289.4M350.0 283.1L351.5 283.7M351.8 246.7L351.7 248.8M347.4 288.4L348.8 290.3M349.0 250.0L350.4 252.2M350.5 286.2L352.5 288.1M350.1 286.8L347.9 287.0M348.6 288.3L348.2 290.7M353.0 287.3L350.5 287.3M351.7 249.4L351.3 251.7M348.5 269.9L348.9 271.6M347.0 260.9L349.6 262.0"/>
<path class="w2" d="M374.4 223.9L375.9 225.9M355.6 223.3L356.0 225.4M374.1 223.5L373.0 225.0M365.2 224.1L366.3 225.7M361.1 224.6L358.9 226.5M362.5 225.1L361.6 226.4M366.8 225.5L365.3 226.0M377.5 224.3L377.0 226.5M364.5 225.8L362.0 226.0M366.7 225.5L364.8 225.8M369.0 224.5L370.4 227.0M381.1 224.1L383.5 225.5M358.4 224.4L360.1 226.3M371.7 223.6L373.4 225.6M373.4 223.0L373.3 225.7M385.7 223.8L387.0 224.9M377.0 224.6L379.8 225.3M356.4 225.8L358.8 225.8M374.0 224.0L373.6 225.7M388.5 223.7L390.7 225.1M354.7 224.9L357.3 226.2M377.0 225.1L376.6 226.6M384.9 223.9L387.5 224.4M386.8 223.9L386.9 225.4M365.8 224.3L364.6 227.0M381.4 223.8L380.7 226.3M359.5 223.9L358.3 225.9M364.6 224.7L363.4 226.2M374.3 224.8L373.7 226.6M361.0 225.8L363.2 226.1"/>
<path class="w2" d="M386.2 243.8L385.4 246.1M384.1 244.4L382.3 246.6M355.0 243.7L357.1 245.0M375.6 245.4L375.0 246.9M371.0 245.4L368.8 246.8M382.3 245.1L382.3 247.5M372.1 244.3L373.7 245.9M377.9 244.8L378.2 246.8M372.2 244.9L370.5 247.3M359.8 245.5L359.2 247.1M381.8 245.5L380.3 245.6M368.2 245.2L370.5 245.9M372.8 246.7L370.3 246.9M380.4 246.0L379.8 247.8M359.0 245.8L359.4 247.4M364.4 244.7L361.5 245.2M363.0 243.0L362.2 245.9M382.2 245.3L379.5 246.1M388.7 243.9L386.0 245.2M361.4 245.0L363.5 245.3M364.5 245.7L362.7 247.0M369.8 245.0L368.2 246.5M371.2 245.3L373.1 246.5M373.0 245.1L374.9 245.4M388.3 244.6L388.1 247.2M373.3 244.9L372.5 246.5M359.5 243.2L357.7 245.2M360.5 244.3L359.1 245.1M389.7 245.1L390.1 247.9M369.5 244.3L367.2 245.2M365.5 244.9L365.6 246.7M372.1 243.7L373.8 245.0M371.8 244.9L371.7 247.2M365.5 244.0L366.5 246.7"/>
<path class="w2" d="M362.5 253.0L362.8 254.6M357.3 253.2L359.2 253.9M360.7 252.6L358.4 253.8M358.7 252.1L356.8 253.9M361.3 252.6L359.2 253.6M356.7 252.5L355.2 253.9M362.6 252.9L361.3 253.9M358.8 253.5L357.0 253.9M361.7 253.1L360.0 253.5M362.5 252.6L361.1 254.4M362.3 253.7L360.5 255.0M353.8 253.1L355.4 255.5M365.0 252.8L362.3 253.6M355.7 253.1L353.9 254.0"/>
<path class="w2" d="M364.3 283.3L365.8 283.6M363.7 266.5L365.3 268.7M365.0 275.0L365.7 276.9M365.9 256.2L364.8 257.7M364.3 256.3L364.0 258.7M364.0 257.0L364.2 259.2M366.5 267.2L364.4 268.7M364.3 270.6L364.5 272.1M364.3 263.7L365.5 265.0M365.5 284.7L364.0 284.8M365.4 281.8L364.2 282.9M366.0 282.3L364.5 284.5M363.0 259.1L365.7 259.3M363.5 267.9L365.1 268.7M365.0 265.2L363.5 267.4M363.9 267.7L364.9 270.0M364.2 274.9L365.3 277.2M366.5 278.3L364.0 279.4M364.4 282.3L366.0 284.6M363.6 276.9L366.0 277.2M364.1 270.0L365.1 271.9M364.3 276.6L366.0 278.4M363.4 276.4L365.7 277.9M363.0 272.9L365.7 274.1M365.6 259.2L364.3 260.6M364.6 261.3L363.9 263.1"/>
<path class="w" d="M347.5 222.5L347.5 296.5"/>
<path class="w" d="M347 296.5L391 296.5"/>
<path class="w" d="M354.5 248L354.5 290"/>
<rect class="w" x="360.5" y="226.5" width="40" height="15.5" rx="3"/>
<path class="w2" d="M386.7 237.6L386.7 240.0M388.5 238.8L390.4 238.8M383.1 232.7L383.1 234.8M385.7 233.0L388.2 233.0M381.6 231.3L381.6 233.3M385.6 236.6L385.6 238.6M380.8 234.9L380.8 236.7M381.1 234.2L381.1 236.0M385.9 234.9L388.8 234.9M384.2 235.5L384.2 238.2M380.7 233.2L383.1 233.2M389.0 237.3L389.0 239.0M382.6 232.1L384.5 232.1M383.2 234.3L385.4 234.3"/>
<polyline class="y" points="363.5,264.5 352,264.5 352,284.5 363.5,284.5 363.5,268"/>
<path class="c" d="M349 274.5h4"/>
<path class="w2" d="M356 266L356 283"/>
<path class="w" d="M374 279C376 272 382 268 391 268"/>
<path class="c" d="M391.5 262L391.5 268"/>
<text class="yt" x="366" y="266.5" font-size="6.5">主卫</text>
<polygon points="198,321.5 206,321.5 206,331.5 220,331.5 220,339.5 198,339.5" fill="url(#xh)"/>
<polygon points="369.5,545 380,545 380,573.5 359.5,573.5 359.5,565.5 369.5,565.5" fill="url(#xh)"/>
<polygon points="604,499 613,499 613,514 628,514 628,524 604,524" fill="url(#xh)"/>
<rect class="y" x="241.5" y="223.5" width="56" height="62"/>
<rect class="y" x="245.5" y="227.5" width="19" height="11"/>
<rect class="y" x="270.5" y="227.5" width="19" height="11"/>
<path class="y" d="M248 229l4 2v5M262 230l-3 3 3 4M273 230l4 2-3 5M287 229l-3 4 4 3"/>
<rect class="y" x="222.5" y="223.5" width="19" height="13"/>
<rect class="y" x="297.5" y="223.5" width="20" height="13"/>
<path class="w2" d="M230.8 226.5L228.9 228.7M225.0 231.7L223.3 233.5M231.0 224.5L227.7 228.3M232.0 224.0L229.0 227.0M231.4 224.4L229.3 226.8M240.3 232.2L237.7 235.1M240.7 224.0L237.4 227.3M233.8 230.5L231.5 233.0M236.9 227.2L235.2 229.0M228.8 232.9L225.9 236.0M229.4 226.1L227.1 228.8M238.5 231.5L235.2 235.1M232.8 232.2L230.7 234.6M239.6 224.1L237.5 226.4"/>
<path class="w2" d="M307.1 227.0L304.1 230.4M306.3 230.2L304.1 232.6M301.2 230.4L299.1 232.7M304.1 225.2L301.2 228.4M309.4 230.5L307.2 233.1M302.8 227.4L300.5 230.1M300.1 229.0L298.2 231.0M316.0 232.4L314.3 234.4M303.3 224.2L300.7 227.1M305.7 228.3L303.2 231.1M313.2 232.9L311.4 234.9M307.1 232.6L304.2 235.9M309.5 224.0L306.3 226.9M301.5 229.4L298.4 232.9"/>
<path class="y2" d="M236.3 229.9L234.8 231.6M235.5 230.2L233.3 232.7M232.1 228.3L230.3 230.3M233.4 226.1L231.4 228.4"/>
<path class="y2" d="M308.0 227.5L305.9 229.9M313.1 226.9L311.4 228.9M306.0 229.4L303.7 232.0M314.0 228.1L311.7 230.7"/>
<rect class="gf" x="251" y="238" width="3" height="2.5"/>
<rect class="gf" x="251" y="243" width="3" height="3.5"/>
<path class="w" d="M244 250l52-9M246 254l40-8M249 258l22-6M250 262l6-3M250 265l3-2"/>
<polyline class="gk2" points="298,258 314.5,258 314.5,299.5 257,299.5 257,285.5"/>
<polyline class="y" points="297.5,262.5 311.5,262.5 311.5,295.5 261.5,295.5 261.5,285.5"/>
<path class="w2" d="M307.1 266.1L310.7 268.5M306.5 267.8L308.9 268.7M300.8 271.2L302.7 272.5M302.1 278.3L303.4 280.7M299.1 274.6L299.2 279.0M301.3 265.3L302.0 269.2M308.6 265.0L308.7 267.4M306.4 292.7L310.7 293.6M306.8 267.5L309.0 271.2M308.5 269.3L310.5 271.8M306.6 263.5L304.9 266.3M305.2 265.1L303.6 268.2M304.2 292.5L300.7 292.9M311.0 274.3L308.3 276.4M308.9 291.2L307.6 293.6M299.8 286.1L302.8 287.9M298.4 271.2L300.5 273.4M304.6 273.2L307.1 273.2M303.1 284.7L299.4 286.3M300.2 265.0L302.2 267.3M304.6 271.9L306.9 272.9M299.6 277.8L300.5 281.0M302.3 266.9L298.3 268.5M298.6 282.4L301.1 284.5M299.8 275.2L302.6 277.6M303.5 272.2L302.5 275.8M300.1 283.8L303.8 283.9M299.8 273.2L298.6 277.3M301.3 271.7L305.3 273.0M308.2 265.7L306.7 268.6M300.1 287.6L302.5 287.8M307.5 284.9L303.5 285.0M307.5 283.5L309.7 284.6M300.8 277.3L301.0 281.0M298.0 270.5L301.7 270.8M303.9 269.7L303.6 272.1M300.6 292.2L298.7 295.0M309.7 277.9L308.8 281.2M306.2 278.9L310.1 280.1M300.2 291.1L298.0 294.4"/>
<path class="w2" d="M295.5 291.5L292.2 291.8M291.7 289.3L294.4 290.8M276.6 292.4L274.3 293.3M279.0 290.8L275.0 291.1M266.4 292.8L266.0 295.0M271.1 290.2L271.0 293.1M275.5 287.1L274.5 290.3M295.6 290.5L297.7 291.8M269.1 292.3L266.3 294.2M266.3 290.0L269.5 291.9M293.8 291.2L297.7 292.7M268.9 291.9L272.6 293.2M276.4 287.6L275.2 290.5M280.0 291.4L279.5 295.0M288.6 288.6L290.2 290.8M280.7 289.5L281.8 293.7M270.2 292.7L269.7 295.0M294.6 292.9L298.0 294.0M271.2 290.4L273.0 292.0M290.6 288.4L289.2 291.0M267.1 287.9L266.8 290.5M277.6 288.2L274.4 290.3M286.3 286.0L288.2 289.2M281.7 289.5L279.6 291.8M284.0 286.5L282.3 289.0M272.6 292.0L270.2 295.0M268.8 292.1L271.4 292.6M266.0 290.5L268.0 294.2M272.1 289.9L268.5 292.4M283.3 289.1L286.7 290.1M265.2 288.9L267.4 290.7M262.8 287.4L265.4 288.7M272.6 292.4L272.6 295.0M264.9 286.3L266.8 289.7M282.6 290.7L285.3 292.9M290.1 288.8L291.9 291.9M293.0 292.1L295.1 293.4M287.7 286.7L284.9 289.3M292.1 289.5L288.4 290.7M290.5 291.8L292.3 295.0"/>
<text class="yt" x="259" y="313.8" font-size="7">主卧</text>
<rect class="y" x="247.5" y="329.5" width="34" height="3"/>
<polyline class="y" points="239.5,340.5 218.5,340.5 218.5,362"/>
<polyline class="m" points="239.5,340.5 239.5,362.5 218.5,362.5"/>
<path class="c" d="M222 358L236 344M224 345l10 12M226 350h8"/>
<path class="c2" d="M233 360l5 -4"/>
<text class="yt" x="194" y="386.5" font-size="7.6">阳台</text>
<circle class="m" cx="285" cy="351" r="9.6"/>
<path class="c2" d="M283.5 344.9l1.2 3.5M283.5 348.9l-2.1 0.9M283.7 353.5l-2.4 0.4M284.3 355.7l-4.1 1.4M286.9 357.0l0.1 3.1M286.6 345.9l0.2 3.4M289.0 345.8l1.1 1.7M287.7 345.6l1.5 3.7M283.0 346.4l-0.9 3.0M285.4 348.1l-1.8 2.4M289.4 353.8l-1.2 2.6M283.7 351.8l-3.9 1.0M284.9 354.7l3.3 2.7M287.9 352.3l0.9 3.2M283.1 352.7l3.0 2.0M282.7 346.2l4.0 2.0M283.2 353.4l0.1 3.2M278.0 353.4l1.2 2.5M285.1 354.0l-4.1 0.2M284.7 346.6l2.2 1.2M288.7 357.5l1.1 2.6M290.2 355.2l-2.9 2.0M288.6 344.5l2.7 1.0M288.3 357.3l-1.4 2.3M281.4 349.6l2.0 0.5M287.0 344.0l2.6 1.4M287.4 346.0l2.0 0.9M285.9 348.1l-2.7 2.7M279.9 347.8l1.8 2.5M286.1 345.1l-0.4 3.2M283.3 346.9l2.8 2.3M284.2 357.3l-2.0 0.8M279.6 349.2l-3.8 0.9M284.9 351.4l-4.3 0.9"/>
<circle class="m" cx="368.5" cy="351" r="9.6"/>
<path class="c2" d="M370.0 355.3l1.0 2.1M374.3 349.1l2.7 1.3M372.9 356.6l-4.4 0.4M373.3 348.3l0.7 3.6M373.9 354.2l-1.5 4.0M370.2 349.4l2.2 1.1M368.1 349.8l-4.2 0.8M374.5 354.8l1.8 1.8M368.1 353.9l-0.5 4.1M371.3 355.1l-2.8 2.1M370.6 343.8l-0.9 4.1M367.3 353.8l-1.8 1.6M370.6 349.7l1.6 2.2M373.3 350.6l2.2 1.1M363.0 346.8l-2.7 2.5M372.5 353.3l-2.5 0.3M365.6 353.2l1.2 2.3M363.0 355.5l1.5 1.5M364.1 355.7l-0.2 2.9M364.3 345.1l0.7 2.4M369.7 355.9l3.3 2.7M371.0 356.7l-1.2 3.3M363.4 348.4l2.8 0.2M373.4 353.2l-1.7 1.8M372.1 351.8l3.6 1.1M363.5 350.9l3.4 0.5M372.5 355.7l2.1 0.5M372.3 344.6l0.9 3.6M369.3 358.4l3.4 2.6M361.8 348.2l4.3 0.9M370.0 350.1l4.4 0.5M365.8 352.4l2.3 0.5M364.9 351.2l1.3 2.0M372.9 356.1l1.1 1.8"/>
<polyline class="m" points="302.5,343 350.5,343 350.5,346 354,346 354,357.5 350.5,357.5 350.5,360.5 302.5,360.5 302.5,357.5 299,357.5 299,346 302.5,346 302.5,343"/>
<path class="m" d="M319 343L319 360"/>
<path class="m" d="M334.5 343L334.5 360"/>
<path class="m" d="M296 351v3h3M357 351v3h-3"/>
<polyline class="m" points="276,365.5 292.5,365.5 292.5,372 290,372 290,396 292.5,396 292.5,403.5 276,403.5 276,396 273.5,396 273.5,372 276,372 276,365.5"/>
<path class="m" d="M274 383.5L290 383.5"/>
<polyline class="m" points="360,368.5 374.5,368.5 374.5,372 377.5,372 377.5,390 374.5,390 374.5,393.5 360,393.5 360,390 357.5,390 357.5,372 360,372 360,368.5"/>
<rect class="m" x="312.5" y="372.5" width="23" height="23"/>
<rect class="m" x="314.5" y="374.5" width="19" height="19"/>
<path class="c" d="M317.7 386.6L320.8 388.7M326.9 391.3L329.2 392.9M326.5 390.5L329.7 392.7M314.9 377.4L317.7 379.3M316.2 380.1L318.3 381.5M322.9 388.7L325.9 390.7M323.1 391.1L325.8 393.0M314.3 390.9L316.3 392.2"/>
<circle class="wf" cx="324.5" cy="384" r="4.2"/>
<path class="cf2" d="M292.5 376.5C297 391 312 403 332 408L327 408.5C308 404.5 295 397 292.8 385Z"/>
<path class="m" d="M337 361C346 364 352 369 356 374M331 408C336 410 342 411 348 411"/>
<polyline class="ck" points="284.5,403.5 284.5,412 363.5,412 363.5,394"/>
<path class="m" d="M285 409.5L363 409.5"/>
<path class="ck" d="M363.5 360L363.5 368"/>
<path class="m" d="M286 405L286 410"/>
<path class="gr" d="M396.9 354.8l2.4 3.2M407.2 349.7l-1.3 3.9M396.2 351.1l-4.4 0.8M409.1 351.4l0.7 2.0M402.7 352.8l-1.7 1.9M405.2 350.9l-2.6 1.9M396.6 346.9l1.7 1.1M399.8 351.7l2.4 2.6M395.8 353.8l-1.1 2.6M394.7 355.3l-0.8 2.9M393.9 349.4l2.2 3.7M401.5 356.8l-3.8 1.9M404.2 354.5l-2.7 0.1M404.6 355.4l2.6 2.3M405.8 355.8l1.4 1.7M398.2 347.0l-0.6 3.2M406.8 348.3l0.7 1.9M395.3 350.6l-0.8 3.5M397.6 351.0l0.0 3.2M394.3 345.5l2.0 2.4M408.2 353.4l3.0 2.7M402.0 347.4l-3.1 1.0M393.8 352.7l-3.2 0.5M395.1 350.9l-2.9 1.6M398.1 352.9l3.2 2.6M403.8 344.4l-3.6 1.0M403.0 345.3l-3.3 2.3M404.5 355.7l1.5 2.1M401.8 350.0l-0.1 2.9M402.5 345.6l-4.2 1.2M398.9 349.2l-1.1 2.0M409.8 349.8l1.4 2.0M397.5 345.2l-3.6 0.2M406.5 354.4l4.1 0.8M401.5 344.8l-3.2 1.3M408.0 348.7l0.1 3.0M399.6 351.3l3.5 1.9M401.6 355.7l-2.8 2.4M394.9 350.1l1.6 1.9M395.5 346.2l-2.8 0.5M409.1 347.8l2.7 3.5M393.3 346.2l-2.1 1.8M399.2 355.1l0.1 2.1M405.3 346.9l0.3 3.8M400.5 353.4l-0.7 2.5M399.3 352.0l2.8 0.5M390.9 349.4l-1.3 2.7M396.5 352.2l0.4 4.4M405.2 353.5l-2.2 3.3M393.0 348.7l-4.2 0.8M400.4 355.3l-3.3 0.0M403.8 355.8l2.3 0.4M395.5 349.4l-2.4 2.9M396.8 355.7l-1.7 3.4M394.2 351.7l3.0 1.0"/>
<path class="gr" d="M498.9 400.9l2.1 0.4M492.9 407.5l0.5 2.3M489.4 404.5l-2.1 2.2M490.6 398.5l-0.8 2.0M493.0 400.4l3.1 0.5M495.1 402.7l1.1 3.0M498.1 406.1l-2.9 1.4M490.6 400.7l-2.3 0.1M492.6 405.2l-3.0 1.3M490.3 404.5l-2.5 0.9M494.8 397.6l0.5 2.9M489.8 404.1l1.9 3.0M490.7 404.3l-2.4 2.1M488.0 403.4l0.4 2.9M498.3 399.0l-2.3 1.9M491.0 398.0l2.3 3.1M498.1 401.0l-1.6 2.7M491.9 400.2l-2.5 2.2M497.0 402.1l-1.3 1.6M489.0 405.1l2.4 2.6M494.2 406.2l-2.5 0.0M494.8 401.7l-1.0 3.9M495.5 399.3l-1.1 3.6M493.9 397.3l-0.6 2.5M492.3 398.2l-0.6 4.4M497.0 406.5l2.0 3.3M496.5 401.5l-0.7 3.2M491.0 402.6l-1.6 3.9M491.8 399.7l-2.5 1.7M496.4 406.2l0.4 3.3M498.0 402.2l-2.9 0.4M493.6 400.9l2.2 3.0M491.5 397.4l1.0 2.5M490.7 405.9l2.9 0.2M492.2 400.6l2.3 3.5M496.2 401.3l1.9 1.2M498.1 405.2l-1.8 1.9M488.5 402.8l4.0 0.4M495.3 400.4l-2.2 3.0M490.6 407.3l2.5 2.0"/>
<path class="gr" d="M543.0 282.1l-2.8 1.9M542.0 275.9l2.0 1.7M542.9 277.7l-2.8 0.3M542.3 280.2l-3.7 2.2M543.1 277.1l1.7 3.4M543.9 283.6l-2.4 1.0M542.9 280.8l-1.3 1.6M543.3 277.8l-2.9 1.6"/>
<path class="w" d="M389 343l6 3M411 343l-5 4"/>
<text class="yt" x="400" y="384" font-size="5.5">过道</text>
<text class="yt" x="280.5" y="438.5" font-size="6">客厅</text>
<text class="yt" x="279" y="490.5" font-size="7.5">次卧</text>
<rect class="y" x="274.5" y="455.5" width="35" height="3"/>
<rect class="y" x="274.5" y="465.5" width="35" height="3"/>
<rect class="ol" x="267" y="504.6" width="53" height="3.2"/>
<rect class="ol" x="267" y="510" width="53" height="3.2"/>
<rect class="ol" x="267" y="515.4" width="53" height="3.2"/>
<rect class="ol" x="267" y="520.8" width="53" height="3.2"/>
<rect class="ol" x="267" y="526.2" width="53" height="3.2"/>
<rect class="ol" x="267" y="531.6" width="53" height="3.2"/>
<rect class="ol" x="267" y="537" width="53" height="3.2"/>
<rect class="ol" x="267" y="542.4" width="53" height="3.2"/>
<path class="bk" d="M272.5 504L272.5 547"/>
<path class="bk" d="M278.5 504L278.5 547"/>
<path class="bk" d="M284.5 504L284.5 547"/>
<path class="bk" d="M290.5 504L290.5 547"/>
<path class="bk" d="M296.5 504L296.5 547"/>
<path class="bk" d="M302.5 504L302.5 547"/>
<path class="bk" d="M308.5 504L308.5 547"/>
<path class="bk" d="M314.5 504L314.5 547"/>
<rect class="wd" x="265.5" y="503.5" width="55" height="63"/>
<path class="wd" d="M266 563.5L320 563.5"/>
<path class="y2" d="M256.6 553.1L259.3 553.4M265.7 559.4L263.8 560.2M250.4 551.3L249.0 553.2M253.4 559.6L251.9 561.8M256.2 554.4L255.7 557.1M253.4 554.2L254.9 556.2M248.6 554.8L247.9 557.3M249.8 561.5L250.1 564.5M254.5 562.4L252.1 564.7M259.2 559.6L259.2 562.4M254.5 557.0L254.8 560.1M258.2 561.8L255.9 562.7M247.0 555.7L250.2 556.1M257.0 554.7L260.1 556.8M263.2 559.4L261.2 562.3M256.0 555.3L255.4 559.0M265.8 563.4L263.9 564.5M252.4 563.1L252.0 566.0M253.4 561.2L253.2 565.2M248.1 564.9L250.4 565.0M253.2 559.8L256.1 560.8M265.1 556.6L262.8 558.7M257.7 552.4L258.1 556.1M259.2 553.3L259.7 556.3M254.1 558.6L253.3 560.4M250.9 559.9L252.6 561.2M262.5 556.1L259.4 556.5M248.5 558.9L251.0 561.6M259.3 561.7L261.3 562.0M260.7 553.2L262.4 554.4M252.1 558.0L249.5 558.3M251.0 561.9L253.8 563.7M256.9 563.9L260.0 564.4M253.3 561.5L255.7 563.9M252.4 558.3L249.9 558.6M253.3 563.0L252.2 564.8"/>
<path class="y2" d="M324.0 553.6L326.3 556.5M334.7 563.3L333.1 566.0M328.5 560.3L328.5 562.4M330.5 555.9L330.3 558.0M322.0 563.6L323.0 566.0M325.7 559.4L323.4 560.0M331.7 557.4L329.3 559.5M326.8 553.6L325.4 555.3M335.5 551.6L337.9 553.3M337.6 558.8L335.1 561.3M335.3 552.1L333.3 553.3M322.9 552.3L326.6 552.7M326.6 552.9L330.3 553.4M331.1 563.8L333.3 564.0M325.7 554.1L328.0 554.9M331.6 553.4L334.2 555.0M328.7 552.5L328.1 555.4M327.0 558.0L330.2 558.4M323.4 556.3L327.2 556.4M332.2 555.2L331.7 559.0M325.1 555.9L323.4 558.1M332.7 563.6L335.3 564.0M328.3 560.7L325.7 562.8M337.1 552.7L338.3 556.2M336.8 553.4L333.3 553.6M337.4 554.9L336.1 558.6M339.1 558.8L335.4 560.2M337.4 560.4L335.1 560.7M327.2 558.6L330.5 560.0M322.2 559.2L323.9 561.2M332.0 552.7L332.6 556.3M338.1 553.9L339.5 557.0M324.0 562.1L326.5 563.9M326.8 552.0L328.8 552.0M329.2 555.5L325.9 555.6M322.0 560.3L324.2 562.3"/>
<path class="y2" d="M306.4 559.1L303.3 559.7M283.1 552.7L285.3 556.0M289.8 556.6L293.4 558.5M317.8 551.0L316.8 553.5M268.2 553.5L271.4 555.6M298.4 557.3L296.0 557.5M272.8 549.0L273.3 552.4M304.3 555.4L301.5 556.7M272.4 556.9L275.1 557.2M267.8 551.4L271.2 552.1M275.8 555.8L273.2 557.4M275.5 555.8L272.7 559.0M298.0 555.6L294.5 557.2M319.1 552.0L316.3 554.4M291.8 549.0L292.0 551.5M298.7 554.4L298.6 556.8M275.9 554.8L273.5 558.6M308.2 551.5L308.7 554.9M310.6 553.9L307.4 554.8M287.3 553.3L289.3 557.3M268.5 553.9L272.2 554.9M275.3 549.9L276.1 553.4M306.0 553.7L307.9 556.1M311.2 552.3L315.4 552.4M290.7 550.6L294.6 552.3M306.9 549.5L305.5 551.9M288.6 556.3L292.9 557.0M286.1 550.8L284.1 552.4M269.7 555.0L270.1 559.3M306.5 552.0L310.1 552.5M293.3 553.0L290.7 553.7M302.9 550.3L298.7 551.3M300.9 551.9L298.1 555.2M308.6 549.2L308.5 551.7M297.1 559.9L294.6 561.0M294.5 552.5L297.8 554.5M306.3 551.9L307.2 555.6M304.0 554.7L306.3 555.5M276.6 557.2L276.7 560.9M284.7 552.9L288.5 555.2"/>
<polyline class="y" points="247.5,566 247.5,550.5 265,550.5"/>
<polyline class="y" points="339.5,566 339.5,550.5 321,550.5"/>
<rect class="c" x="471.5" y="393.5" width="39" height="20"/>
<path class="w2" d="M496.0 396.4L493.2 399.5M497.8 399.6L494.3 403.6M479.5 398.2L476.8 401.3M504.6 405.9L500.9 410.1M488.5 404.1L485.7 407.2M495.3 408.4L491.4 412.0M486.0 399.8L482.6 403.6M508.9 402.2L505.8 405.7M502.3 401.2L498.6 405.4M487.8 401.1L484.2 405.1M507.4 406.2L504.0 410.0M476.5 403.9L473.5 407.3"/>
<rect class="m" x="474" y="378.5" width="16" height="13.5" rx="2"/>
<rect class="m" x="492.5" y="378.5" width="16.5" height="13.5" rx="2"/>
<rect class="m" x="474" y="414.5" width="16" height="14.0" rx="2"/>
<rect class="m" x="492.5" y="414.5" width="16.5" height="14.0" rx="2"/>
<rect class="m" x="457.5" y="396.5" width="13.5" height="15.0" rx="2"/>
<rect class="m" x="511" y="396.5" width="13.5" height="15.0" rx="2"/>
<path class="c" d="M476 392v-11M488 392v-11M494.5 392v-11M507 392v-11M476 415v11M488 415v11M494.5 415v11M507 415v11M471 398h-11M471 410h-11M511 398h11M511 410h11"/>
<path class="m" d="M490 398l5 2-4 4"/>
<text class="yt" x="517" y="428.5" font-size="6">餐厅</text>
<rect class="m" x="516.5" y="467.5" width="16" height="22"/>
<path class="m" d="M518.0 476.7L520.8 477.6M524.9 472.6L525.2 475.6M522.3 477.5L522.7 480.0M521.7 479.4L519.2 481.7M520.8 474.7L519.9 476.9M524.8 477.7L527.6 479.4M521.5 474.4L523.1 476.4M518.7 477.6L521.0 477.8M522.6 470.2L522.3 473.9M529.4 482.1L526.3 483.2M527.7 481.2L528.3 484.8M529.0 484.4L525.4 484.9"/>
<text class="yt" x="554" y="477.5" font-size="6">书房</text>
<rect class="gf" x="551" y="502" width="23" height="13"/>
<path class="c" d="M555 507a3 3 0 0 1 4-1M566 506a3 3 0 0 1 3 6M561 509h2"/>
<text class="yt" x="631" y="493.5" font-size="7.5">厨房</text>
<path class="c" d="M500 345C497 335 501 328 507 328S517 335 514 345"/>
<path class="c3" d="M498 345q4 3 9 1t9-1v7M498 345v7"/>
<path class="gk" d="M499 349q8 4 16-1M500 352h15"/>
<path class="wh" d="M466 345q-3-6 5-7 4-2 8 0 7-1 8 4 2 5-5 6-2 3-5 1-4 2-6-1-4-.5-5-3z"/>
<path class="wh" d="M474 346v4M478 346v4"/>
<text class="yt" x="498" y="326.5" font-size="7">次卫</text>
<path class="wm" d="M619.5 593.5V605H648C632 604 622 600 619.5 593.5Z"/>
<path class="wm" d="M650 605C662 604 666 601 669 597.5C673 601 684 604 703 605Z"/>
<text class="wmt" x="711" y="602.5" font-size="23">经</text>
<rect class="bkf" x="728.5" y="578" width="11.5" height="28"/>
<text class="wmt2" x="708" y="623" font-size="14">du</text>
<path class="wm" d="M680 561l3-2"/>
<path class="d" d="M205.5 152.5L550 152.5"/>
<path class="d" d="M205.5 167.5L340.5 167.5"/>
<path class="d" d="M347.5 166.5L550 166.5"/>
<path class="d" d="M205.5 148L205.5 182"/>
<path class="d" d="M340.5 164L340.5 182"/>
<path class="d" d="M347.5 164L347.5 182"/>
<path class="d" d="M549.5 149L549.5 182"/>
<path class="d t" d="M203 155L208 150"/>
<path class="d t" d="M203 170L208 165"/>
<path class="d t" d="M338 170L343 165"/>
<path class="d t" d="M345 169L350 164"/>
<path class="d t" d="M547 155L552 150"/>
<path class="d t" d="M547 169L552 164"/>
<text class="r" x="378" y="151.5">11160</text>
<text class="r" x="273" y="166">4360</text>
<text class="r" x="381.5" y="166">2180</text>
<path class="d" d="M125.5 222.5L125.5 566.5"/>
<path class="d" d="M146.5 222.5L146.5 458.5"/>
<path class="d" d="M123 222.5L141 222.5"/>
<path class="d" d="M144 222.5L162 222.5"/>
<path class="d" d="M144 332.5L162 332.5"/>
<path class="d" d="M144 339.5L162 339.5"/>
<path class="d" d="M144 458.5L162 458.5"/>
<path class="d" d="M123 566.5L141 566.5"/>
<path class="d t" d="M123 225L128 220"/>
<path class="d t" d="M144 225L149 220"/>
<path class="d t" d="M144 335L149 330"/>
<path class="d t" d="M144 342L149 337"/>
<path class="d t" d="M144 461L149 456"/>
<path class="d t" d="M123 569L128 564"/>
<text class="r" x="145.5" y="277" transform="rotate(-90 145.5 277)">3560</text>
<text class="r" x="124.5" y="394" transform="rotate(-90 124.5 394)">11140</text>
<text class="r" x="145.5" y="399.5" transform="rotate(-90 145.5 399.5)">3940</text>
<path class="g" d="M216.5 465.5L216.5 566.5"/>
<path class="g" d="M214 566.5L232 566.5"/>
<path class="g t" d="M214 569L219 564"/>
<path class="g t" d="M214.5 469L218.5 465"/>
<text class="r" x="215.5" y="515" transform="rotate(-90 215.5 515)">3260</text>
<path class="d" d="M744.5 194.5L744.5 517.5"/>
<path class="d" d="M759.5 194.5L759.5 517.5"/>
<path class="d" d="M729 194.5L761 194.5"/>
<path class="d" d="M729 517.5L761 517.5"/>
<path class="d" d="M729 285.5L746 285.5"/>
<path class="d t" d="M742 288L747 283"/>
<path class="d" d="M729 292.5L746 292.5"/>
<path class="d t" d="M742 295L747 290"/>
<path class="d" d="M729 352.5L746 352.5"/>
<path class="d t" d="M742 355L747 350"/>
<path class="d" d="M729 359.5L746 359.5"/>
<path class="d t" d="M742 362L747 357"/>
<path class="d" d="M729 445.5L746 445.5"/>
<path class="d t" d="M742 448L747 443"/>
<path class="d" d="M729 453.5L746 453.5"/>
<path class="d t" d="M742 456L747 451"/>
<path class="d t" d="M742 197L747 192"/>
<path class="d t" d="M757 197L762 192"/>
<path class="d t" d="M742 520L747 515"/>
<path class="d t" d="M757 520L762 515"/>
<text class="r" x="743.5" y="239.5" transform="rotate(-90 743.5 239.5)">2960</text>
<text class="r" x="743.5" y="304.5" transform="rotate(-90 743.5 304.5)">240</text>
<text class="r" x="743.5" y="323" transform="rotate(-90 743.5 323)">1927</text>
<text class="r" x="743.5" y="370.5" transform="rotate(-90 743.5 370.5)">240</text>
<text class="r" x="743.5" y="402.5" transform="rotate(-90 743.5 402.5)">2600</text>
<text class="r" x="743.5" y="464.5" transform="rotate(-90 743.5 464.5)">240</text>
<text class="r" x="743.5" y="484.5" transform="rotate(-90 743.5 484.5)">2070</text>
<text class="r" x="758.5" y="356" transform="rotate(-90 758.5 356)">10477</text>
<path class="d" d="M246.5 606.5L724.5 606.5"/>
<path class="d" d="M246.5 626.5L724.5 626.5"/>
<path class="d" d="M246.5 591L246.5 628"/>
<path class="d" d="M724.5 589L724.5 628"/>
<path class="d" d="M371.5 591L371.5 609"/>
<path class="d" d="M447.5 591L447.5 609"/>
<path class="d" d="M509.5 591L509.5 609"/>
<path class="d" d="M514.5 591L514.5 609"/>
<path class="d" d="M605.5 591L605.5 609"/>
<path class="d" d="M611.5 591L611.5 609"/>
<path class="d t" d="M244 609L249 604"/>
<path class="d t" d="M369 609L374 604"/>
<path class="d t" d="M445 609L450 604"/>
<path class="d t" d="M507 609L512 604"/>
<path class="d t" d="M512 609L517 604"/>
<path class="d t" d="M603 609L608 604"/>
<path class="d t" d="M609 609L614 604"/>
<path class="d t" d="M659 609L664 604"/>
<path class="d t" d="M666 609L671 604"/>
<path class="d t" d="M722 609L727 604"/>
<path class="d t" d="M244 629L249 624"/>
<path class="d t" d="M722 629L727 624"/>
<text class="r" x="309.5" y="605.5">4060</text>
<text class="r" x="409.5" y="605.5">2460</text>
<text class="r" x="477.5" y="605.5">1980</text>
<text class="r" x="561" y="605.5">2980</text>
<text class="r" x="669" y="605.5">2660</text>
<text class="r" x="486" y="625.5">15920</text>
<rect class="d" x="31.5" y="623.5" width="9" height="9"/>
<path class="d" d="M35.5 580L35.5 628.5"/>
<path class="d" d="M35.5 628.5L84 628.5"/>
<path class="d" d="M32.5 580.5L35.5 569.5L38.5 580.5ZM35.5 570V580"/>
<path class="d" d="M84.5 624.5L96 628.5L84.5 632.5ZM84 628.5H96"/>
<text class="u" x="37.5" y="560">Y</text>
<text class="u" x="109.5" y="634">X</text>
</svg>
<div class="a" id="dd"><div class="r" style="top:1px"><b style="background:#ff0000"></b><span>红</span></div><div class="r" style="top:17px"><b style="background:#ffff00"></b><span>黄</span></div><div class="r" style="top:33px"><b style="background:#00ff00"></b><span>绿</span></div><div class="r" style="top:49px"><b style="background:#00ffff"></b><span>青</span></div><div class="r" style="top:65px"><b style="background:#0000ff"></b><span>蓝</span></div><div class="r" style="top:81px"><b style="background:#ff00ff"></b><span>洋红</span></div><div class="r" style="top:97px"><b style="background:linear-gradient(45deg,#fff 50%,#000 50%)"></b><span>白</span></div><div class="r" style="top:113px"><b style="background:#99990a"></b><span>颜色<u>54</u></span></div><div class="r" style="top:129px"><b style="background:#828282"></b><span style="left:20px;top:-1px;width:111px;height:14px;line-height:13px;background:#3399ff;color:#fff;border:1px dotted #c87a28;padding-left:0">颜色<u>252</u></span></div><div class="r" style="top:145px"><b style="background:#c0c0c0;border-color:#222"><svg width="8" height="8" viewBox="0 0 8 8" style="position:absolute;left:0;top:0"><rect width="8" height="2" fill="#0ff"/><rect x="1" y="3" width="1.4" height="2" fill="#00f"/><rect x="3.3" y="3" width="1.4" height="2" fill="#ff0"/><rect x="5.6" y="3" width="1.4" height="2" fill="#f00"/><rect x="1" y="6" width="1.4" height="2" fill="#0f0"/><rect x="3.3" y="6" width="1.4" height="2" fill="#0ff"/><rect x="5.6" y="6" width="1.4" height="2" fill="#f0f"/></svg></b><span>选择颜色<s>...</s></span></div><div style="position:absolute;left:133px;top:0;width:17px;height:166px;background:#f0f0f0"></div><div style="position:absolute;left:134px;top:40px;width:15px;height:106px;box-sizing:border-box;border:1px solid #9a9a9a;border-radius:2px;background:linear-gradient(90deg,#f8f8f8 0,#ededee 45%,#dfdfe2 50%,#d2d2d6 100%)"></div><div style="position:absolute;left:138px;top:87px;width:7px;height:7px;background:repeating-linear-gradient(#6d6d6d 0 1px,#f5f5f5 1px 2px)"></div><div style="position:absolute;left:138px;top:7px;width:0;height:0;border-left:3.5px solid transparent;border-right:3.5px solid transparent;border-bottom:4px solid #555"></div><div style="position:absolute;left:138px;top:154px;width:0;height:0;border-left:3.5px solid transparent;border-right:3.5px solid transparent;border-top:4px solid #555"></div></div>
</body></html>
